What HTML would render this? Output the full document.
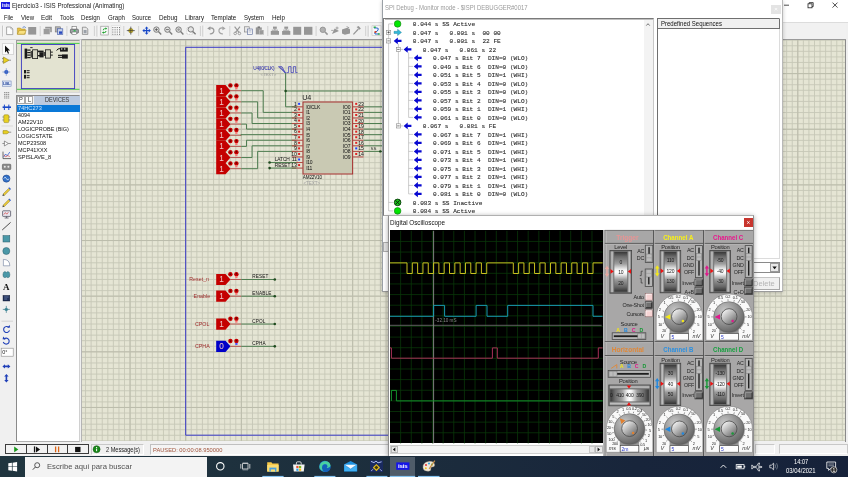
<!DOCTYPE html>
<html><head><meta charset="utf-8"><title>ISIS</title>
<style>
html,body{margin:0;padding:0;}
body{width:848px;height:477px;overflow:hidden;position:relative;background:#f0f0f0;font-family:"Liberation Sans",sans-serif;}
div{position:absolute;box-sizing:border-box;}
svg{position:absolute;left:0;top:0;overflow:visible;}
.t{white-space:nowrap;font-family:"Liberation Sans",sans-serif;}
.m{font-family:"Liberation Mono",monospace;}
</style></head><body><div id="root" style="left:0;top:0;width:848px;height:477px;overflow:hidden;will-change:transform;background:#f0f0f0;">

<div style="left:0px;top:0px;width:848px;height:23px;background:#ffffff;"></div>
<div style="left:0px;top:23px;width:848px;height:17px;background:#f1f1f1;"></div>
<div style="left:1px;top:2px;width:9px;height:7px;background:#1a1ae0;"></div>
<div class="t" style="left:2px;top:3px;font-size:5px;line-height:5px;color:#fff;letter-spacing:-0.2px;font-weight:bold;">isis</div>
<div class="t" style="left:12.20px;top:2.40px;font-size:7.5px;line-height:8.62px;color:#1c1c1c;transform:scaleX(0.8189);transform-origin:0 0;">Ejercicio3 - ISIS Professional (Animating)</div>
<div class="t" style="left:4.00px;top:13.90px;font-size:7.5px;line-height:8.62px;color:#161616;transform:scaleX(0.7695);transform-origin:0 0;">File</div>
<div class="t" style="left:20.50px;top:13.90px;font-size:7.5px;line-height:8.62px;color:#161616;transform:scaleX(0.8064);transform-origin:0 0;">View</div>
<div class="t" style="left:41.00px;top:13.90px;font-size:7.5px;line-height:8.62px;color:#161616;transform:scaleX(0.8511);transform-origin:0 0;">Edit</div>
<div class="t" style="left:59.50px;top:13.90px;font-size:7.5px;line-height:8.62px;color:#161616;transform:scaleX(0.7996);transform-origin:0 0;">Tools</div>
<div class="t" style="left:81.00px;top:13.90px;font-size:7.5px;line-height:8.62px;color:#161616;transform:scaleX(0.8138);transform-origin:0 0;">Design</div>
<div class="t" style="left:107.50px;top:13.90px;font-size:7.5px;line-height:8.62px;color:#161616;transform:scaleX(0.8155);transform-origin:0 0;">Graph</div>
<div class="t" style="left:132.00px;top:13.90px;font-size:7.5px;line-height:8.62px;color:#161616;transform:scaleX(0.7995);transform-origin:0 0;">Source</div>
<div class="t" style="left:158.50px;top:13.90px;font-size:7.5px;line-height:8.62px;color:#161616;transform:scaleX(0.8370);transform-origin:0 0;">Debug</div>
<div class="t" style="left:184.50px;top:13.90px;font-size:7.5px;line-height:8.62px;color:#161616;transform:scaleX(0.8288);transform-origin:0 0;">Library</div>
<div class="t" style="left:211.00px;top:13.90px;font-size:7.5px;line-height:8.62px;color:#161616;transform:scaleX(0.8313);transform-origin:0 0;">Template</div>
<div class="t" style="left:244.00px;top:13.90px;font-size:7.5px;line-height:8.62px;color:#161616;transform:scaleX(0.7998);transform-origin:0 0;">System</div>
<div class="t" style="left:271.50px;top:13.90px;font-size:7.5px;line-height:8.62px;color:#161616;transform:scaleX(0.8428);transform-origin:0 0;">Help</div>
<svg width="848" height="14"><g stroke="#222" stroke-width="0.8" fill="none"><path d="M784 5.2h5"/><rect x="808" y="3.8" width="4" height="4"/><path d="M809.2 3.8v-1.2h4v4h-1.2"/><path d="M832.5 2.6l5 5M837.5 2.6l-5 5"/></g></svg>
<div id="cv" style="left:82px;top:40px;width:766px;height:401px;background:#e5e5d4;overflow:hidden;">
<svg width="766" height="401">
<path d="M3.56 0V401M9.12 0V401M14.69 0V401M20.25 0V401M25.82 0V401M31.38 0V401M36.95 0V401M42.51 0V401M48.07 0V401M53.64 0V401M59.20 0V401M64.77 0V401M70.33 0V401M75.90 0V401M81.46 0V401M87.02 0V401M92.59 0V401M98.15 0V401M103.72 0V401M109.28 0V401M114.85 0V401M120.41 0V401M125.98 0V401M131.54 0V401M137.10 0V401M142.67 0V401M148.23 0V401M153.80 0V401M159.36 0V401M164.93 0V401M170.49 0V401M176.06 0V401M181.62 0V401M187.18 0V401M192.75 0V401M198.31 0V401M203.88 0V401M209.44 0V401M215.01 0V401M220.57 0V401M226.13 0V401M231.70 0V401M237.26 0V401M242.83 0V401M248.39 0V401M253.96 0V401M259.52 0V401M265.09 0V401M270.65 0V401M276.21 0V401M281.78 0V401M287.34 0V401M292.91 0V401M298.47 0V401M304.04 0V401M309.60 0V401M315.17 0V401M320.73 0V401M326.29 0V401M331.86 0V401M337.42 0V401M342.99 0V401M348.55 0V401M354.12 0V401M359.68 0V401M365.24 0V401M370.81 0V401M376.37 0V401M381.94 0V401M387.50 0V401M393.07 0V401M398.63 0V401M404.20 0V401M409.76 0V401M415.32 0V401M420.89 0V401M426.45 0V401M432.02 0V401M437.58 0V401M443.15 0V401M448.71 0V401M454.28 0V401M459.84 0V401M465.40 0V401M470.97 0V401M476.53 0V401M482.10 0V401M487.66 0V401M493.23 0V401M498.79 0V401M504.35 0V401M509.92 0V401M515.48 0V401M521.05 0V401M526.61 0V401M532.18 0V401M537.74 0V401M543.31 0V401M548.87 0V401M554.43 0V401M560.00 0V401M565.56 0V401M571.13 0V401M576.69 0V401M582.26 0V401M587.82 0V401M593.39 0V401M598.95 0V401M604.51 0V401M610.08 0V401M615.64 0V401M621.21 0V401M626.77 0V401M632.34 0V401M637.90 0V401M643.46 0V401M649.03 0V401M654.59 0V401M660.16 0V401M665.72 0V401M671.29 0V401M676.85 0V401M682.42 0V401M687.98 0V401M693.54 0V401M699.11 0V401M704.67 0V401M710.24 0V401M715.80 0V401M721.37 0V401M726.93 0V401M732.50 0V401M738.06 0V401M743.62 0V401M749.19 0V401M754.75 0V401M760.32 0V401M765.88 0V401" stroke="#c6c7b7" stroke-width="0.9" fill="none"/>
<path d="M0 0.21H766M0 5.78H766M0 11.34H766M0 16.91H766M0 22.47H766M0 28.04H766M0 33.60H766M0 39.16H766M0 44.73H766M0 50.29H766M0 55.86H766M0 61.42H766M0 66.99H766M0 72.55H766M0 78.12H766M0 83.68H766M0 89.24H766M0 94.81H766M0 100.37H766M0 105.94H766M0 111.50H766M0 117.07H766M0 122.63H766M0 128.19H766M0 133.76H766M0 139.32H766M0 144.89H766M0 150.45H766M0 156.02H766M0 161.58H766M0 167.15H766M0 172.71H766M0 178.27H766M0 183.84H766M0 189.40H766M0 194.97H766M0 200.53H766M0 206.10H766M0 211.66H766M0 217.23H766M0 222.79H766M0 228.35H766M0 233.92H766M0 239.48H766M0 245.05H766M0 250.61H766M0 256.18H766M0 261.74H766M0 267.30H766M0 272.87H766M0 278.43H766M0 284.00H766M0 289.56H766M0 295.13H766M0 300.69H766M0 306.26H766M0 311.82H766M0 317.38H766M0 322.95H766M0 328.51H766M0 334.08H766M0 339.64H766M0 345.21H766M0 350.77H766M0 356.34H766M0 361.90H766M0 367.46H766M0 373.03H766M0 378.59H766M0 384.16H766M0 389.72H766M0 395.29H766M0 400.85H766" stroke="#c6c7b7" stroke-width="0.9" fill="none"/>
<path d="M0 33.60H766M48.07 0V401M0 89.24H766M103.72 0V401M0 144.89H766M159.36 0V401M0 200.53H766M215.01 0V401M0 256.18H766M270.65 0V401M0 311.82H766M326.29 0V401M0 367.46H766M381.94 0V401M437.58 0V401M493.23 0V401M548.87 0V401M604.51 0V401M660.16 0V401M715.80 0V401" stroke="#bcbdac" stroke-width="1" fill="none"/>
</svg></div>
<div style="left:0px;top:38.9px;width:82px;height:0.8px;background:#d4d4d4;"></div>
<div style="left:81.3px;top:39.4px;width:765px;height:0.9px;background:#9a9a9a;"></div>
<div style="left:81.2px;top:39.4px;width:0.9px;height:402.6px;background:#b4b4b4;"></div>
<div style="left:845.4px;top:40px;width:0.9px;height:402px;background:#8a8a8a;"></div>
<div style="left:846.3px;top:23px;width:1.7px;height:420px;background:#f0f0f0;"></div>
<div style="left:0px;top:22.2px;width:848px;height:1.2px;background:#dcdcdc;"></div>
<svg width="848" height="477" style="font-family:'Liberation Sans',sans-serif;">
<path d="M700 47.3H185.7V435.2H700" stroke="#3a3ac8" stroke-width="1" fill="none"/>
<path d="M216.2 85.11000000000001H225.5L230.5 90.71000000000001L225.5 96.31H216.2Z" fill="#c40000"/>
<text x="221.5" y="93.71000000000001" font-size="8.2" fill="#efc6c6" text-anchor="middle">1</text>
<circle cx="230.39999999999998" cy="85.41000000000001" r="2.2" fill="#c80000"/><circle cx="236.39999999999998" cy="85.41000000000001" r="2.2" fill="#c80000"/>
<circle cx="230.39999999999998" cy="85.41000000000001" r="0.9" fill="#700000"/><circle cx="236.39999999999998" cy="84.91000000000001" r="0.9" fill="#700000"/>
<rect x="235.29999999999998" y="87.31" width="2.2" height="2" fill="#ff7070"/>
<path d="M230.2 90.71000000000001H241.2" stroke="#b24a44" stroke-width="0.9"/>
<path d="M241.2 90.71000000000001H263.20V112.39H296.3" stroke="#47784a" stroke-width="0.95" fill="none"/>
<path d="M216.2 96.25H225.5L230.5 101.85L225.5 107.44999999999999H216.2Z" fill="#c40000"/>
<text x="221.5" y="104.85" font-size="8.2" fill="#efc6c6" text-anchor="middle">1</text>
<circle cx="230.39999999999998" cy="96.55" r="2.2" fill="#c80000"/><circle cx="236.39999999999998" cy="96.55" r="2.2" fill="#c80000"/>
<circle cx="230.39999999999998" cy="96.55" r="0.9" fill="#700000"/><circle cx="236.39999999999998" cy="96.05" r="0.9" fill="#700000"/>
<rect x="235.29999999999998" y="98.44999999999999" width="2.2" height="2" fill="#ff7070"/>
<path d="M230.2 101.85H241.2" stroke="#b24a44" stroke-width="0.9"/>
<path d="M241.2 101.85H257.63V117.96H296.3" stroke="#47784a" stroke-width="0.95" fill="none"/>
<path d="M216.2 107.39000000000001H225.5L230.5 112.99000000000001L225.5 118.59H216.2Z" fill="#c40000"/>
<text x="221.5" y="115.99000000000001" font-size="8.2" fill="#efc6c6" text-anchor="middle">1</text>
<circle cx="230.39999999999998" cy="107.69000000000001" r="2.2" fill="#c80000"/><circle cx="236.39999999999998" cy="107.69000000000001" r="2.2" fill="#c80000"/>
<circle cx="230.39999999999998" cy="107.69000000000001" r="0.9" fill="#700000"/><circle cx="236.39999999999998" cy="107.19000000000001" r="0.9" fill="#700000"/>
<rect x="235.29999999999998" y="109.59" width="2.2" height="2" fill="#ff7070"/>
<path d="M230.2 112.99000000000001H241.2" stroke="#b24a44" stroke-width="0.9"/>
<path d="M241.2 112.99000000000001H252.06V123.53H296.3" stroke="#47784a" stroke-width="0.95" fill="none"/>
<path d="M216.2 118.53H225.5L230.5 124.13L225.5 129.73H216.2Z" fill="#c40000"/>
<text x="221.5" y="127.13" font-size="8.2" fill="#efc6c6" text-anchor="middle">1</text>
<circle cx="230.39999999999998" cy="118.83" r="2.2" fill="#c80000"/><circle cx="236.39999999999998" cy="118.83" r="2.2" fill="#c80000"/>
<circle cx="230.39999999999998" cy="118.83" r="0.9" fill="#700000"/><circle cx="236.39999999999998" cy="118.33" r="0.9" fill="#700000"/>
<rect x="235.29999999999998" y="120.72999999999999" width="2.2" height="2" fill="#ff7070"/>
<path d="M230.2 124.13H241.2" stroke="#b24a44" stroke-width="0.9"/>
<path d="M241.2 124.13H246.49V129.10H296.3" stroke="#47784a" stroke-width="0.95" fill="none"/>
<path d="M216.2 129.67000000000002H225.5L230.5 135.27L225.5 140.87H216.2Z" fill="#c40000"/>
<text x="221.5" y="138.27" font-size="8.2" fill="#efc6c6" text-anchor="middle">1</text>
<circle cx="230.39999999999998" cy="129.97" r="2.2" fill="#c80000"/><circle cx="236.39999999999998" cy="129.97" r="2.2" fill="#c80000"/>
<circle cx="230.39999999999998" cy="129.97" r="0.9" fill="#700000"/><circle cx="236.39999999999998" cy="129.47" r="0.9" fill="#700000"/>
<rect x="235.29999999999998" y="131.87" width="2.2" height="2" fill="#ff7070"/>
<path d="M230.2 135.27H241.2" stroke="#b24a44" stroke-width="0.9"/>
<path d="M241.2 135.27H240.92V134.67H296.3" stroke="#47784a" stroke-width="0.95" fill="none"/>
<path d="M216.2 140.81H225.5L230.5 146.41L225.5 152.01H216.2Z" fill="#c40000"/>
<text x="221.5" y="149.41" font-size="8.2" fill="#efc6c6" text-anchor="middle">1</text>
<circle cx="230.39999999999998" cy="141.10999999999999" r="2.2" fill="#c80000"/><circle cx="236.39999999999998" cy="141.10999999999999" r="2.2" fill="#c80000"/>
<circle cx="230.39999999999998" cy="141.10999999999999" r="0.9" fill="#700000"/><circle cx="236.39999999999998" cy="140.60999999999999" r="0.9" fill="#700000"/>
<rect x="235.29999999999998" y="143.01" width="2.2" height="2" fill="#ff7070"/>
<path d="M230.2 146.41H241.2" stroke="#b24a44" stroke-width="0.9"/>
<path d="M241.2 146.41H246.49V140.24H296.3" stroke="#47784a" stroke-width="0.95" fill="none"/>
<path d="M216.2 151.95000000000002H225.5L230.5 157.55L225.5 163.15H216.2Z" fill="#c40000"/>
<text x="221.5" y="160.55" font-size="8.2" fill="#efc6c6" text-anchor="middle">1</text>
<circle cx="230.39999999999998" cy="152.25" r="2.2" fill="#c80000"/><circle cx="236.39999999999998" cy="152.25" r="2.2" fill="#c80000"/>
<circle cx="230.39999999999998" cy="152.25" r="0.9" fill="#700000"/><circle cx="236.39999999999998" cy="151.75" r="0.9" fill="#700000"/>
<rect x="235.29999999999998" y="154.15" width="2.2" height="2" fill="#ff7070"/>
<path d="M230.2 157.55H241.2" stroke="#b24a44" stroke-width="0.9"/>
<path d="M241.2 157.55H252.06V145.81H296.3" stroke="#47784a" stroke-width="0.95" fill="none"/>
<path d="M216.2 163.09H225.5L230.5 168.69L225.5 174.29H216.2Z" fill="#c40000"/>
<text x="221.5" y="171.69" font-size="8.2" fill="#efc6c6" text-anchor="middle">1</text>
<circle cx="230.39999999999998" cy="163.39" r="2.2" fill="#c80000"/><circle cx="236.39999999999998" cy="163.39" r="2.2" fill="#c80000"/>
<circle cx="230.39999999999998" cy="163.39" r="0.9" fill="#700000"/><circle cx="236.39999999999998" cy="162.89" r="0.9" fill="#700000"/>
<rect x="235.29999999999998" y="165.29" width="2.2" height="2" fill="#ff7070"/>
<path d="M230.2 168.69H241.2" stroke="#b24a44" stroke-width="0.9"/>
<path d="M241.2 168.69H257.63V151.38H296.3" stroke="#47784a" stroke-width="0.95" fill="none"/>
<rect x="303.0" y="102.0" width="49.60000000000002" height="72.0" fill="#c9c9b3" stroke="#a83030" stroke-width="1"/>
<text x="302.3" y="100.3" font-size="7.2" fill="#222" letter-spacing="-0.2">U4</text>
<text x="302.8" y="178.8" font-size="4.6" fill="#111" letter-spacing="-0.15">AM22V10</text>
<text x="303.5" y="184.6" font-size="4.6" fill="#a0a0a0" letter-spacing="-0.1">&lt;TEXT&gt;</text>
<path d="M291.8 106.82H303.0" stroke="#b24a44" stroke-width="1"/>
<rect x="298.1" y="102.82" width="2" height="2" fill="#2040ff"/>
<text x="296.90000000000003" y="105.62" font-size="5.2" fill="#111" text-anchor="end" letter-spacing="-0.1">1</text>
<text x="306.2" y="108.72" font-size="5" fill="#111" letter-spacing="-0.25">I0/CLK</text>
<path d="M291.8 112.39H303.0" stroke="#b24a44" stroke-width="1"/>
<rect x="298.1" y="108.39" width="2" height="2" fill="#e02020"/>
<text x="296.90000000000003" y="111.19" font-size="5.2" fill="#111" text-anchor="end" letter-spacing="-0.1">2</text>
<text x="306.2" y="114.29" font-size="5" fill="#111" letter-spacing="-0.25">I1</text>
<path d="M291.8 117.96H303.0" stroke="#b24a44" stroke-width="1"/>
<rect x="298.1" y="113.96" width="2" height="2" fill="#e02020"/>
<text x="296.90000000000003" y="116.76" font-size="5.2" fill="#111" text-anchor="end" letter-spacing="-0.1">3</text>
<text x="306.2" y="119.86" font-size="5" fill="#111" letter-spacing="-0.25">I2</text>
<path d="M291.8 123.53H303.0" stroke="#b24a44" stroke-width="1"/>
<rect x="298.1" y="119.53" width="2" height="2" fill="#e02020"/>
<text x="296.90000000000003" y="122.33" font-size="5.2" fill="#111" text-anchor="end" letter-spacing="-0.1">4</text>
<text x="306.2" y="125.43" font-size="5" fill="#111" letter-spacing="-0.25">I3</text>
<path d="M291.8 129.10H303.0" stroke="#b24a44" stroke-width="1"/>
<rect x="298.1" y="125.10" width="2" height="2" fill="#e02020"/>
<text x="296.90000000000003" y="127.90" font-size="5.2" fill="#111" text-anchor="end" letter-spacing="-0.1">5</text>
<text x="306.2" y="131.00" font-size="5" fill="#111" letter-spacing="-0.25">I4</text>
<path d="M291.8 134.67H303.0" stroke="#b24a44" stroke-width="1"/>
<rect x="298.1" y="130.67" width="2" height="2" fill="#e02020"/>
<text x="296.90000000000003" y="133.47" font-size="5.2" fill="#111" text-anchor="end" letter-spacing="-0.1">6</text>
<text x="306.2" y="136.57" font-size="5" fill="#111" letter-spacing="-0.25">I5</text>
<path d="M291.8 140.24H303.0" stroke="#b24a44" stroke-width="1"/>
<rect x="298.1" y="136.24" width="2" height="2" fill="#e02020"/>
<text x="296.90000000000003" y="139.04" font-size="5.2" fill="#111" text-anchor="end" letter-spacing="-0.1">7</text>
<text x="306.2" y="142.14" font-size="5" fill="#111" letter-spacing="-0.25">I6</text>
<path d="M291.8 145.81H303.0" stroke="#b24a44" stroke-width="1"/>
<rect x="298.1" y="141.81" width="2" height="2" fill="#e02020"/>
<text x="296.90000000000003" y="144.61" font-size="5.2" fill="#111" text-anchor="end" letter-spacing="-0.1">8</text>
<text x="306.2" y="147.71" font-size="5" fill="#111" letter-spacing="-0.25">I7</text>
<path d="M291.8 151.38H303.0" stroke="#b24a44" stroke-width="1"/>
<rect x="298.1" y="147.38" width="2" height="2" fill="#e02020"/>
<text x="296.90000000000003" y="150.18" font-size="5.2" fill="#111" text-anchor="end" letter-spacing="-0.1">9</text>
<text x="306.2" y="153.28" font-size="5" fill="#111" letter-spacing="-0.25">I8</text>
<path d="M291.8 156.95H303.0" stroke="#b24a44" stroke-width="1"/>
<rect x="298.1" y="152.95" width="2" height="2" fill="#e02020"/>
<text x="296.90000000000003" y="155.75" font-size="5.2" fill="#111" text-anchor="end" letter-spacing="-0.1">10</text>
<text x="306.2" y="158.85" font-size="5" fill="#111" letter-spacing="-0.25">I9</text>
<path d="M291.8 162.52H303.0" stroke="#b24a44" stroke-width="1"/>
<rect x="298.1" y="158.52" width="2" height="2" fill="#2040ff"/>
<text x="296.90000000000003" y="161.32" font-size="5.2" fill="#111" text-anchor="end" letter-spacing="-0.1">11</text>
<text x="306.2" y="164.42" font-size="5" fill="#111" letter-spacing="-0.25">I10</text>
<path d="M291.8 168.09H303.0" stroke="#b24a44" stroke-width="1"/>
<rect x="298.1" y="164.09" width="2" height="2" fill="#e02020"/>
<text x="296.90000000000003" y="166.89" font-size="5.2" fill="#111" text-anchor="end" letter-spacing="-0.1">13</text>
<text x="306.2" y="169.99" font-size="5" fill="#111" letter-spacing="-0.25">I11</text>
<path d="M352.6 106.82H363.6" stroke="#b24a44" stroke-width="1"/>
<rect x="355.20000000000005" y="102.82" width="2" height="2" fill="#e02020"/>
<text x="358.20000000000005" y="105.82" font-size="5.2" fill="#111" letter-spacing="-0.1">23</text>
<text x="350.40000000000003" y="108.72" font-size="5" fill="#111" text-anchor="end" letter-spacing="-0.2">IO0</text>
<path d="M363.6 106.82H384" stroke="#47784a" stroke-width="0.95"/>
<path d="M352.6 112.39H363.6" stroke="#b24a44" stroke-width="1"/>
<rect x="355.20000000000005" y="108.39" width="2" height="2" fill="#e02020"/>
<text x="358.20000000000005" y="111.39" font-size="5.2" fill="#111" letter-spacing="-0.1">22</text>
<text x="350.40000000000003" y="114.29" font-size="5" fill="#111" text-anchor="end" letter-spacing="-0.2">IO1</text>
<path d="M363.6 112.39H384" stroke="#47784a" stroke-width="0.95"/>
<path d="M352.6 117.96H363.6" stroke="#b24a44" stroke-width="1"/>
<rect x="355.20000000000005" y="113.96" width="2" height="2" fill="#e02020"/>
<text x="358.20000000000005" y="116.96" font-size="5.2" fill="#111" letter-spacing="-0.1">21</text>
<text x="350.40000000000003" y="119.86" font-size="5" fill="#111" text-anchor="end" letter-spacing="-0.2">IO2</text>
<path d="M363.6 117.96H384" stroke="#47784a" stroke-width="0.95"/>
<path d="M352.6 123.53H363.6" stroke="#b24a44" stroke-width="1"/>
<rect x="355.20000000000005" y="119.53" width="2" height="2" fill="#e02020"/>
<text x="358.20000000000005" y="122.53" font-size="5.2" fill="#111" letter-spacing="-0.1">20</text>
<text x="350.40000000000003" y="125.43" font-size="5" fill="#111" text-anchor="end" letter-spacing="-0.2">IO3</text>
<path d="M363.6 123.53H384" stroke="#47784a" stroke-width="0.95"/>
<path d="M352.6 129.10H363.6" stroke="#b24a44" stroke-width="1"/>
<rect x="355.20000000000005" y="125.10" width="2" height="2" fill="#e02020"/>
<text x="358.20000000000005" y="128.10" font-size="5.2" fill="#111" letter-spacing="-0.1">19</text>
<text x="350.40000000000003" y="131.00" font-size="5" fill="#111" text-anchor="end" letter-spacing="-0.2">IO4</text>
<path d="M363.6 129.10H384" stroke="#47784a" stroke-width="0.95"/>
<path d="M352.6 134.67H363.6" stroke="#b24a44" stroke-width="1"/>
<rect x="355.20000000000005" y="130.67" width="2" height="2" fill="#e02020"/>
<text x="358.20000000000005" y="133.67" font-size="5.2" fill="#111" letter-spacing="-0.1">18</text>
<text x="350.40000000000003" y="136.57" font-size="5" fill="#111" text-anchor="end" letter-spacing="-0.2">IO5</text>
<path d="M363.6 134.67H384" stroke="#47784a" stroke-width="0.95"/>
<path d="M352.6 140.24H363.6" stroke="#b24a44" stroke-width="1"/>
<rect x="355.20000000000005" y="136.24" width="2" height="2" fill="#e02020"/>
<text x="358.20000000000005" y="139.24" font-size="5.2" fill="#111" letter-spacing="-0.1">17</text>
<text x="350.40000000000003" y="142.14" font-size="5" fill="#111" text-anchor="end" letter-spacing="-0.2">IO6</text>
<path d="M363.6 140.24H384" stroke="#47784a" stroke-width="0.95"/>
<path d="M352.6 145.81H363.6" stroke="#b24a44" stroke-width="1"/>
<rect x="355.20000000000005" y="141.81" width="2" height="2" fill="#e02020"/>
<text x="358.20000000000005" y="144.81" font-size="5.2" fill="#111" letter-spacing="-0.1">16</text>
<text x="350.40000000000003" y="147.71" font-size="5" fill="#111" text-anchor="end" letter-spacing="-0.2">IO7</text>
<path d="M363.6 145.81H384" stroke="#47784a" stroke-width="0.95"/>
<path d="M352.6 151.38H363.6" stroke="#b24a44" stroke-width="1"/>
<rect x="355.20000000000005" y="147.38" width="2" height="2" fill="#2040ff"/>
<text x="358.20000000000005" y="150.38" font-size="5.2" fill="#111" letter-spacing="-0.1">15</text>
<text x="350.40000000000003" y="153.28" font-size="5" fill="#111" text-anchor="end" letter-spacing="-0.2">IO8</text>
<path d="M363.6 151.38H384" stroke="#47784a" stroke-width="0.95"/>
<path d="M352.6 156.95H363.6" stroke="#b24a44" stroke-width="1"/>
<rect x="355.20000000000005" y="152.95" width="2" height="2" fill="#e02020"/>
<text x="358.20000000000005" y="155.95" font-size="5.2" fill="#111" letter-spacing="-0.1">14</text>
<text x="350.40000000000003" y="158.85" font-size="5" fill="#111" text-anchor="end" letter-spacing="-0.2">IO9</text>
<text x="370.5" y="150.3" font-size="4.4" fill="#222">SS</text>
<circle cx="380.3" cy="151.38" r="1.2" fill="#1e4a1e"/>
<text x="253.3" y="70" font-size="4.7" fill="#1818a8" letter-spacing="-0.25">U4(I0/CLK)</text>
<text x="260.5" y="75.6" font-size="4.4" fill="#9a9a9a" letter-spacing="-0.1">&lt;TEXT&gt;</text>
<path d="M278.5 66.7L282 66.7L285.6 73.2Z M280.2 66.7L285.6 73.2" stroke="#3030b8" stroke-width="0.7" fill="none"/>
<path d="M286.5 72.6H288.6V66.6H291V72.6H293.4V66.6H295.7V72.6H297.5" stroke="#3030b8" stroke-width="0.7" fill="none"/>
<path d="M285.6 73.2V106.82H296.3" stroke="#47784a" stroke-width="0.95" fill="none"/>
<path d="M285.6 91H384" stroke="#47784a" stroke-width="0.95" fill="none"/>
<circle cx="285.6" cy="91" r="1.3" fill="#1e4a1e"/>
<path d="M269.6 162.52H296.3" stroke="#47784a" stroke-width="0.95"/>
<circle cx="269.6" cy="162.52" r="1.3" fill="#1e4a1e"/>
<text x="274.8" y="161.32" font-size="4.8" fill="#111" letter-spacing="-0.1">LATCH</text>
<path d="M269.6 168.09H296.3" stroke="#47784a" stroke-width="0.95"/>
<circle cx="269.6" cy="168.09" r="1.3" fill="#1e4a1e"/>
<text x="274.8" y="166.89" font-size="4.8" fill="#111" letter-spacing="-0.1">RESET</text>
<path d="M216.2 273.89H225.5L230.5 279.49L225.5 285.09000000000003H216.2Z" fill="#c40000"/>
<text x="221.5" y="282.49" font-size="8.2" fill="#efc6c6" text-anchor="middle">1</text>
<circle cx="230.39999999999998" cy="274.19" r="2.2" fill="#c80000"/><circle cx="236.39999999999998" cy="274.19" r="2.2" fill="#c80000"/>
<circle cx="230.39999999999998" cy="274.19" r="0.9" fill="#700000"/><circle cx="236.39999999999998" cy="273.69" r="0.9" fill="#700000"/>
<rect x="235.29999999999998" y="276.09000000000003" width="2.2" height="2" fill="#ff7070"/>
<path d="M230.2 279.49H241.2" stroke="#b24a44" stroke-width="0.9"/>
<text x="189.3" y="281.49" font-size="5.3" fill="#a02c2c">Reset_n</text>
<path d="M241.2 279.49H274.8" stroke="#47784a" stroke-width="0.95"/>
<circle cx="274.8" cy="279.49" r="1.3" fill="#1e4a1e"/>
<text x="252.3" y="278.09" font-size="4.7" fill="#111" letter-spacing="0.1">RESET</text>
<path d="M216.2 290.6H225.5L230.5 296.20000000000005L225.5 301.80000000000007H216.2Z" fill="#c40000"/>
<text x="221.5" y="299.20000000000005" font-size="8.2" fill="#efc6c6" text-anchor="middle">1</text>
<circle cx="230.39999999999998" cy="290.90000000000003" r="2.2" fill="#c80000"/><circle cx="236.39999999999998" cy="290.90000000000003" r="2.2" fill="#c80000"/>
<circle cx="230.39999999999998" cy="290.90000000000003" r="0.9" fill="#700000"/><circle cx="236.39999999999998" cy="290.40000000000003" r="0.9" fill="#700000"/>
<rect x="235.29999999999998" y="292.80000000000007" width="2.2" height="2" fill="#ff7070"/>
<path d="M230.2 296.20000000000005H241.2" stroke="#b24a44" stroke-width="0.9"/>
<text x="193.6" y="298.20" font-size="5.3" fill="#a02c2c">Enable</text>
<path d="M241.2 296.20H274.8" stroke="#47784a" stroke-width="0.95"/>
<circle cx="274.8" cy="296.20" r="1.3" fill="#1e4a1e"/>
<text x="252.3" y="294.80" font-size="4.7" fill="#111" letter-spacing="0.1">ENABLE</text>
<path d="M216.2 318.45H225.5L230.5 324.05L225.5 329.65000000000003H216.2Z" fill="#c40000"/>
<text x="221.5" y="327.05" font-size="8.2" fill="#efc6c6" text-anchor="middle">1</text>
<circle cx="230.39999999999998" cy="318.75" r="2.2" fill="#c80000"/><circle cx="236.39999999999998" cy="318.75" r="2.2" fill="#c80000"/>
<circle cx="230.39999999999998" cy="318.75" r="0.9" fill="#700000"/><circle cx="236.39999999999998" cy="318.25" r="0.9" fill="#700000"/>
<rect x="235.29999999999998" y="320.65000000000003" width="2.2" height="2" fill="#ff7070"/>
<path d="M230.2 324.05H241.2" stroke="#b24a44" stroke-width="0.9"/>
<text x="195.0" y="326.05" font-size="5.3" fill="#a02c2c">CPOL</text>
<path d="M241.2 324.05H274.8" stroke="#47784a" stroke-width="0.95"/>
<circle cx="274.8" cy="324.05" r="1.3" fill="#1e4a1e"/>
<text x="252.3" y="322.65" font-size="4.7" fill="#111" letter-spacing="0.1">CPOL</text>
<path d="M216.2 340.73H225.5L230.5 346.33000000000004L225.5 351.93000000000006H216.2Z" fill="#0000c8"/>
<text x="221.5" y="349.33000000000004" font-size="8.2" fill="#efc6c6" text-anchor="middle">0</text>
<circle cx="230.39999999999998" cy="341.03000000000003" r="2.2" fill="#c80000"/><circle cx="236.39999999999998" cy="341.03000000000003" r="2.2" fill="#c80000"/>
<circle cx="230.39999999999998" cy="341.03000000000003" r="0.9" fill="#700000"/><circle cx="236.39999999999998" cy="340.53000000000003" r="0.9" fill="#700000"/>
<rect x="235.29999999999998" y="342.93000000000006" width="2.2" height="2" fill="#5050ff"/>
<path d="M230.2 346.33000000000004H241.2" stroke="#b24a44" stroke-width="0.9"/>
<text x="195.0" y="348.33" font-size="5.3" fill="#a02c2c">CPHA</text>
<path d="M241.2 346.33H274.8" stroke="#47784a" stroke-width="0.95"/>
<circle cx="274.8" cy="346.33" r="1.3" fill="#1e4a1e"/>
<text x="252.3" y="344.93" font-size="4.7" fill="#111" letter-spacing="0.1">CPHA</text>
</svg>
<div style="left:0;top:40px;width:15px;height:402px;background:#f0f0f0;"></div>
<div style="left:1.5px;top:42.5px;width:12px;height:12.5px;background:#fbfbfb;border:1px solid #d8d8d8;"></div>
<div style="left:16px;top:40px;width:64.2px;height:53px;background:#e3e3d1;border:1px solid #9c9c9c;border-right-color:#d8d8d8;border-bottom-color:#d8d8d8;"></div>
<svg width="100" height="100">
<path d="M17 43.4H79.5M17 89.3H79.5" stroke="#38c838" stroke-width="0.9"/>
<rect x="21.4" y="44.5" width="53.2" height="44.1" fill="none" stroke="#3838c0" stroke-width="0.9"/>
<rect x="24.6" y="48.6" width="2.6" height="10" fill="#1a1a1a"/><rect x="27.2" y="49.5" width="3.4" height="1.2" fill="#1a1a1a"/><rect x="27.2" y="52" width="3.4" height="1.2" fill="#1a1a1a"/><rect x="27.2" y="54.5" width="3.4" height="1.2" fill="#1a1a1a"/><rect x="27.2" y="57" width="3.4" height="1.2" fill="#1a1a1a"/>
<rect x="30.2" y="47.2" width="2.4" height="0.9" fill="#1a1a1a"/>
<rect x="32.6" y="49.8" width="5" height="8.8" fill="#d6d6c4" stroke="#1a1a1a" stroke-width="0.8"/>
<rect x="30.6" y="51" width="2" height="6.5" fill="#1a1a1a" opacity="0.8"/>
<rect x="38" y="50.6" width="5.6" height="1.6" fill="#1a1a1a"/><rect x="39.4" y="52.2" width="4.2" height="5.2" fill="#1a1a1a"/><rect x="38" y="55" width="2" height="1.3" fill="#1a1a1a"/>
<rect x="45.4" y="49.8" width="5" height="8.3" fill="#d6d6c4" stroke="#1a1a1a" stroke-width="0.8"/>
<rect x="43.6" y="52" width="2" height="4" fill="#1a1a1a" opacity="0.8"/><rect x="50.6" y="51.6" width="2.2" height="1" fill="#1a1a1a"/><rect x="50.6" y="54.6" width="2.2" height="1" fill="#1a1a1a"/>
<path d="M56.6 50.6q1-2.2 3.4-2" stroke="#1a1a1a" stroke-width="1" fill="none"/><rect x="60" y="47.6" width="7.8" height="4" fill="#1a1a1a"/><rect x="61" y="48.4" width="1.4" height="1.2" fill="#ddd"/><rect x="64" y="48.4" width="1.4" height="1.2" fill="#ddd"/>
<rect x="58" y="54.8" width="4" height="1.1" fill="#1a1a1a"/><rect x="58" y="56.8" width="4" height="1.1" fill="#1a1a1a"/><rect x="62" y="54.4" width="5.8" height="4.2" fill="#1a1a1a"/>
<rect x="24" y="70" width="2" height="3.4" fill="#1a1a1a"/><rect x="26.6" y="70.2" width="3" height="1" fill="#1a1a1a"/><rect x="26.6" y="72.2" width="3" height="1" fill="#1a1a1a"/>
<rect x="24" y="74.8" width="2" height="3.8" fill="#1a1a1a"/><rect x="26.6" y="75.2" width="3" height="1" fill="#1a1a1a"/><rect x="26.6" y="77.2" width="3" height="1" fill="#1a1a1a"/>
</svg>
<div style="left:16px;top:94.5px;width:63.8px;height:347px;background:#fff;border:1px solid #8a8a8a;border-right-color:#d0d0d0;border-bottom-color:#b0b0b0;"></div>
<div style="left:17px;top:95.5px;width:62.5px;height:9px;background:#f0f0f0;"></div>
<div style="left:17.2px;top:95.8px;width:7.6px;height:8.4px;background:#fcfcfc;border:1px solid #a8a8a8;"></div>
<div style="left:25.4px;top:95.8px;width:7.6px;height:8.4px;background:#fcfcfc;border:1px solid #a8a8a8;"></div>
<div class="t" style="left:19.20px;top:95.90px;font-size:7.3px;line-height:8.39px;color:#333;transform:scaleX(0.7804);transform-origin:0 0;">P</div>
<div class="t" style="left:27.80px;top:95.90px;font-size:7.3px;line-height:8.39px;color:#333;transform:scaleX(0.7882);transform-origin:0 0;">L</div>
<div style="left:34px;top:95.5px;width:45.5px;height:9px;background:#bccadf;"></div>
<div class="t" style="left:44.70px;top:95.90px;font-size:7.1px;line-height:8.16px;color:#333;transform:scaleX(0.7796);transform-origin:0 0;">DEVICES</div>
<div style="left:17px;top:104.6px;width:62.5px;height:7px;background:#0a78d7;"></div>
<div class="t" style="left:18.20px;top:104.30px;font-size:6.1px;line-height:7.01px;color:#cfe6ff;transform:scaleX(0.9234);transform-origin:0 0;">74HC273</div>
<div class="t" style="left:18.20px;top:111.20px;font-size:6.1px;line-height:7.01px;color:#111;transform:scaleX(0.8843);transform-origin:0 0;">4094</div>
<div class="t" style="left:18.20px;top:118.10px;font-size:6.1px;line-height:7.01px;color:#111;transform:scaleX(0.9332);transform-origin:0 0;">AM22V10</div>
<div class="t" style="left:18.20px;top:125.00px;font-size:6.1px;line-height:7.01px;color:#111;transform:scaleX(0.9010);transform-origin:0 0;">LOGICPROBE (BIG)</div>
<div class="t" style="left:18.20px;top:131.90px;font-size:6.1px;line-height:7.01px;color:#111;transform:scaleX(0.9169);transform-origin:0 0;">LOGICSTATE</div>
<div class="t" style="left:18.20px;top:138.80px;font-size:6.1px;line-height:7.01px;color:#111;transform:scaleX(0.9040);transform-origin:0 0;">MCP23S08</div>
<div class="t" style="left:18.20px;top:145.70px;font-size:6.1px;line-height:7.01px;color:#111;transform:scaleX(0.9033);transform-origin:0 0;">MCP41XXX</div>
<div class="t" style="left:18.20px;top:152.60px;font-size:6.1px;line-height:7.01px;color:#111;transform:scaleX(0.9265);transform-origin:0 0;">SPISLAVE_8</div>
<svg width="848" height="60">
<path d="M2.6 25.6V36.6" stroke="#c4c4c4" stroke-width="1"/><path d="M3.6 25.6V36.600" stroke="#fff" stroke-width="0.6"/>
<path d="M97.0 25.6V36.6" stroke="#c4c4c4" stroke-width="1"/><path d="M98.0 25.6V36.600" stroke="#fff" stroke-width="0.6"/>
<path d="M202.9 25.6V36.6" stroke="#c4c4c4" stroke-width="1"/><path d="M203.9 25.6V36.600" stroke="#fff" stroke-width="0.6"/>
<path d="M368.2 25.6V36.6" stroke="#c4c4c4" stroke-width="1"/><path d="M369.2 25.6V36.600" stroke="#fff" stroke-width="0.6"/>
<path d="M40.2 26V36" stroke="#cdcdcd" stroke-width="0.9"/>
<path d="M66.9 26V36" stroke="#cdcdcd" stroke-width="0.9"/>
<path d="M94.4 26V36" stroke="#cdcdcd" stroke-width="0.9"/>
<path d="M123.8 26V36" stroke="#cdcdcd" stroke-width="0.9"/>
<path d="M138.6 26V36" stroke="#cdcdcd" stroke-width="0.9"/>
<path d="M200.4 26V36" stroke="#cdcdcd" stroke-width="0.9"/>
<path d="M229.8 26V36" stroke="#cdcdcd" stroke-width="0.9"/>
<path d="M267.8 26V36" stroke="#cdcdcd" stroke-width="0.9"/>
<path d="M316.1 26V36" stroke="#cdcdcd" stroke-width="0.9"/>
<path d="M365.7 26V36" stroke="#cdcdcd" stroke-width="0.9"/>
<path d="M6.600 27h4.200l2 2v5.600h-6.200z" fill="#fdfdfd" stroke="#8a8a8a" stroke-width="0.7"/><path d="M10.800 27v2h2" fill="none" stroke="#8a8a8a" stroke-width="0.5"/>
<path d="M17.400 28h3l.8 1h4v5.200h-7.800z" fill="#e8c040" stroke="#a88820" stroke-width="0.5"/><path d="M17.400 34.200l1.800-3.800h7l-1.800 3.800z" fill="#f8e080" stroke="#a88820" stroke-width="0.5"/><path d="M22.600 27.400q1.800-1.400 3.200.2" stroke="#4870c0" stroke-width="0.8" fill="none"/>
<rect x="28.2" y="27" width="8" height="7.600" fill="#969696"/>
<rect x="45.200" y="26.800" width="6.600" height="5.400" fill="#969696"/><rect x="43.400" y="28.800" width="6.600" height="5.600" fill="#9c9c9c" stroke="#f0f0f0" stroke-width="0.4"/>
<rect x="55.2" y="26.800" width="5.400" height="5.200" fill="#b0b0b0" stroke="#6a6a6a" stroke-width="0.5"/><rect x="57.600" y="28.800" width="5.200" height="5.600" fill="#c8d4e8" stroke="#3850a8" stroke-width="0.6"/><rect x="59" y="31.400" width="3" height="2.400" fill="#2848c0"/>
<rect x="72" y="26.600" width="4.600" height="3" fill="#fff" stroke="#555" stroke-width="0.5"/><rect x="70.400" y="29.200" width="8" height="4" rx="0.8" fill="#a0a4a8" stroke="#444" stroke-width="0.6"/><rect x="72" y="32" width="4.600" height="2.600" fill="#fff" stroke="#555" stroke-width="0.5"/><rect x="73.600" y="30.200" width="2" height="1.200" fill="#20c040"/>
<path d="M82.400 27.200h3.600l1.800 1.800v5.400h-5.400z" fill="#e8e8e8" stroke="#666" stroke-width="0.6"/><rect x="83.600" y="30" width="3" height="3.200" fill="#9aa0a8"/>
<rect x="100.800" y="26.200" width="7.400" height="8.800" fill="#fafafa" stroke="#8a8a8a" stroke-width="0.6"/><path d="M102.600 30.200q.6-2.200 3-2l-.2-1l1.800 1.400l-1.800 1.400l.2-.9q-1.600-.2-2 1.100z M106.600 31q-.4 2.200-3 2l.2 1l-1.800-1.400l1.800-1.400l-.2.900q1.600.2 2-1.100z" fill="#18a028"/>
<rect x="111.200" y="25.800" width="9.600" height="9.800" fill="#fbfbfb" stroke="#d8d8d8" stroke-width="0.5"/>
<rect x="112.4" y="27.2" width="0.9" height="0.9" fill="#444"/>
<rect x="112.4" y="29.4" width="0.9" height="0.9" fill="#444"/>
<rect x="112.4" y="31.6" width="0.9" height="0.9" fill="#444"/>
<rect x="112.4" y="33.8" width="0.9" height="0.9" fill="#444"/>
<rect x="114.6" y="27.2" width="0.9" height="0.9" fill="#444"/>
<rect x="114.6" y="29.4" width="0.9" height="0.9" fill="#444"/>
<rect x="114.6" y="31.6" width="0.9" height="0.9" fill="#444"/>
<rect x="114.6" y="33.8" width="0.9" height="0.9" fill="#444"/>
<rect x="116.8" y="27.2" width="0.9" height="0.9" fill="#444"/>
<rect x="116.8" y="29.4" width="0.9" height="0.9" fill="#444"/>
<rect x="116.8" y="31.6" width="0.9" height="0.9" fill="#444"/>
<rect x="116.8" y="33.8" width="0.9" height="0.9" fill="#444"/>
<rect x="119.0" y="27.2" width="0.9" height="0.9" fill="#444"/>
<rect x="119.0" y="29.4" width="0.9" height="0.9" fill="#444"/>
<rect x="119.0" y="31.6" width="0.9" height="0.9" fill="#444"/>
<rect x="119.0" y="33.8" width="0.9" height="0.9" fill="#444"/>
<circle cx="130.800" cy="30.600" r="2.200" fill="#d8c020" stroke="#7a6a10" stroke-width="0.5"/><path d="M126.800 30.600h8M130.800 26.600v8" stroke="#333" stroke-width="0.7"/>
<path d="M146.600 26.400l1.800 2h-1.200v1.600h1.600v-1.200l2 1.800l-2 1.800v-1.200h-1.600v1.600h1.200l-1.800 2l-1.800-2h1.200v-1.600h-1.600v1.200l-2-1.800l2-1.800v1.200h1.600v-1.600h-1.200z" fill="#1848c8"/>
<circle cx="156.4" cy="29.6" r="2.700" fill="#e4e4e4" stroke="#7c7c7c" stroke-width="1"/><path d="M158.4 31.6l2.800 2.800" stroke="#7c7c7c" stroke-width="1.400"/>
<path d="M154.9 29.6h3M156.4 28.1v3" stroke="#444" stroke-width="0.7"/>
<circle cx="167.4" cy="29.6" r="2.700" fill="#e4e4e4" stroke="#7c7c7c" stroke-width="1"/><path d="M169.4 31.6l2.800 2.800" stroke="#7c7c7c" stroke-width="1.400"/>
<path d="M165.9 29.6h3" stroke="#444" stroke-width="0.7"/>
<circle cx="178.6" cy="29.6" r="2.700" fill="#e4e4e4" stroke="#7c7c7c" stroke-width="1"/><path d="M180.6 31.6l2.800 2.800" stroke="#7c7c7c" stroke-width="1.400"/>
<circle cx="178.6" cy="29.6" r="1.300" fill="#9a9a9a"/>
<rect x="187" y="27.600" width="5.400" height="6.600" fill="#fff" stroke="#aaa" stroke-width="0.5" stroke-dasharray="1 0.600"/>
<circle cx="190.8" cy="29.4" r="2.700" fill="#e4e4e4" stroke="#7c7c7c" stroke-width="1"/><path d="M192.8 31.4l2.800 2.800" stroke="#7c7c7c" stroke-width="1.400"/>
<path d="M209.800 34q4.600-.4 4-4.200q-.8-2.400-4.200-1.800" stroke="#969696" stroke-width="1.200" fill="none"/><path d="M207.200 28.400l3.200-2.200v4z" fill="#969696"/>
<path d="M223 34q-4.600-.4-4-4.200q.8-2.400 4.200-1.800" stroke="#a4a4a4" stroke-width="1.200" fill="none"/><path d="M225.600 28.400l-3.200-2.200v4z" fill="#a4a4a4"/>
<path d="M234.600 26.600l4.600 6M240 26.600l-4.600 6" stroke="#969696" stroke-width="1.100"/><circle cx="235.200" cy="33.400" r="1.300" fill="none" stroke="#969696" stroke-width="0.9"/><circle cx="239.400" cy="33.400" r="1.300" fill="none" stroke="#969696" stroke-width="0.9"/>
<rect x="244.600" y="26.800" width="4.600" height="5.200" fill="#e8e8e8" stroke="#7a7a7a" stroke-width="0.6"/><rect x="247.600" y="29" width="4.800" height="5.400" fill="#f4f4f4" stroke="#5a6a9a" stroke-width="0.6"/><path d="M248.600 30.600h2.800M248.600 32h2.800" stroke="#6a7aaa" stroke-width="0.4"/>
<rect x="255.800" y="27.400" width="6" height="7" fill="#969696"/><rect x="257.600" y="26.400" width="2.400" height="1.600" fill="#7a7a7a"/><rect x="259.400" y="30" width="4.400" height="4.600" fill="#9a9a9a" stroke="#eee" stroke-width="0.3"/>
<rect x="270.8" y="31" width="8.200" height="3.800" fill="#969696"/><rect x="273.0" y="26.600" width="3.800" height="2.200" fill="#969696"/><path d="M271.8 30.200h6.200" stroke="#969696" stroke-width="0.9"/><path d="M274.90000000000003 28.800v1.400" stroke="#969696" stroke-width="1"/>
<rect x="282.1" y="31" width="8.200" height="3.800" fill="#969696"/><rect x="284.3" y="26.600" width="3.800" height="2.200" fill="#969696"/><path d="M283.1 30.200h6.200" stroke="#969696" stroke-width="0.9"/><path d="M286.20000000000005 28.800v1.400" stroke="#969696" stroke-width="1"/>
<rect x="293.200" y="26.800" width="8" height="8" fill="#969696"/><rect x="304" y="26.800" width="8.400" height="8" fill="#969696"/>
<circle cx="322.800" cy="29.800" r="2.700" fill="#b0b0b0" stroke="#969696" stroke-width="1"/><path d="M324.800 31.800l2.800 2.800" stroke="#969696" stroke-width="1.500"/>
<path d="M332 34l2.600-5.600l4.400 2.600z" fill="#969696"/><path d="M337 26.600v3M335.600 28h3" stroke="#969696" stroke-width="0.8"/><path d="M331.200 30.400h2.400" stroke="#969696" stroke-width="0.8"/>
<path d="M342 29.400l5.200-1.600l2.800 1.400v4.200l-5.200 1.400l-2.800-1.400z" fill="#969696"/><path d="M346.600 26.600l2.600 1.200" stroke="#969696" stroke-width="0.9"/>
<path d="M353.400 34.400l5-5.400" stroke="#969696" stroke-width="1.200"/><path d="M356.600 27l2-1l2.200 2.600l-1.200 1.200z" fill="#969696"/>
<rect x="372" y="25.800" width="9" height="9.600" fill="#f8f8f8" stroke="#b8b8b8" stroke-width="0.5"/><path d="M374 28h3q2 0 1 2t-2 1.600q-2 .6-1 2.400h3.600" stroke="#2060d0" stroke-width="1" fill="none"/><path d="M373.600 27.200h2.200" stroke="#20a840" stroke-width="1.400"/><path d="M377.800 34h2" stroke="#20a840" stroke-width="1.400"/><circle cx="375.400" cy="32" r="1.100" fill="#e04020"/>
</svg>
<svg width="20" height="477">
<path d="M5 45.600v7l1.700-1.600l1.300 2.800l1.100-.5l-1.300-2.700h2.300z" fill="#111"/>
<path d="M3.400 57v6.400l5.800-3.200z" fill="#e8d020" stroke="#7a6a10" stroke-width="0.5"/><path d="M2 58.600h1.400M2 61.800h1.400M9.200 60.200h1.800" stroke="#555" stroke-width="0.6"/>
<circle cx="6.300" cy="72" r="2.100" fill="#2050c8"/><path d="M2.400 72h7.800M6.300 68.200v7.600" stroke="#6080c0" stroke-width="0.6"/>
<rect x="2.300" y="81" width="8.800" height="5.200" fill="#e0e8f8" stroke="#6078b0" stroke-width="0.5"/><text x="6.700" y="85.300" font-size="4.200" fill="#3050a0" text-anchor="middle" font-weight="bold" letter-spacing="-0.2" style="font-family:'Liberation Sans',sans-serif">LBL</text>
<path d="M4 92.600h5.600M4 94.400h5.600M4 96.200h5.600M4 98h5.600" stroke="#666" stroke-width="0.7" stroke-dasharray="1.400 0.500"/>
<path d="M2.600 107.200h8.400" stroke="#1848c8" stroke-width="1.600"/><path d="M4.400 104.600v5.400M8.800 104.600v5.400" stroke="#1848c8" stroke-width="1"/>
<rect x="3.800" y="114.800" width="5" height="7.800" rx="1" fill="#e8d020" stroke="#8a7a10" stroke-width="0.5"/><path d="M2.400 117h1.400M2.400 120h1.400M8.800 117h1.400M8.800 120h1.400" stroke="#555" stroke-width="0.6"/>
<path d="M1.500 126h11.500" stroke="#d0d0d0" stroke-width="0.7"/>
<path d="M3 130.600h4l2.200 1.600l-2.200 1.600h-4z" fill="#e8d020" stroke="#8a7a10" stroke-width="0.500"/><path d="M9.200 132.200h2" stroke="#555" stroke-width="0.600"/>
<path d="M4.400 141v5l4-2.500z" fill="#fff" stroke="#555" stroke-width="0.600"/><path d="M2.400 143.500h2M8.400 143.500h2.400" stroke="#555" stroke-width="0.600"/>
<path d="M3 151.600v7h8" stroke="#333" stroke-width="0.700" fill="none"/><path d="M3.600 157l2-3l1.600 1.800l2.600-3.800" stroke="#2050d0" stroke-width="0.700" fill="none"/><path d="M3.600 155l2.200 1.800l2-1.200l2 1" stroke="#d03030" stroke-width="0.600" fill="none"/>
<rect x="2.400" y="164.200" width="8.400" height="5.400" rx="0.800" fill="#8a8a8a" stroke="#444" stroke-width="0.500"/><circle cx="4.800" cy="166.800" r="1" fill="#e8e8e8"/><circle cx="8.400" cy="166.800" r="1" fill="#e8e8e8"/>
<circle cx="6.400" cy="178.600" r="3.600" fill="#3070c8" stroke="#183878" stroke-width="0.500"/><path d="M3.800 178.600q1.300-3 2.600 0t2.600 0" stroke="#fff" stroke-width="0.700" fill="none"/>
<path d="M3 194.0l5.600-5.600l1.400 1.400l-5.600 5.600z" fill="#e8c838" stroke="#7a6a20" stroke-width="0.400"/><path d="M3 194.0l-.6 2l2-.6z" fill="#333"/><path d="M8.800 187.6l1.800 1.800" stroke="#2858c8" stroke-width="1.100"/>
<path d="M3 205.2l5.600-5.600l1.400 1.400l-5.600 5.600z" fill="#e8c838" stroke="#7a6a20" stroke-width="0.400"/><path d="M3 205.2l-.6 2l2-.6z" fill="#333"/><path d="M8.800 198.79999999999998l1.800 1.800" stroke="#2858c8" stroke-width="1.100"/>
<rect x="2.600" y="210.800" width="8" height="5.600" rx="0.600" fill="#e8e8f0" stroke="#445" stroke-width="0.700"/><path d="M3.800 214.600l1.600-2l1.400 1.600l1.600-2" stroke="#d02020" stroke-width="0.600" fill="none"/><path d="M4.600 218h4M6.600 216.400v1.600" stroke="#445" stroke-width="0.700"/>
<path d="M2.200 230l8.400-7.600" stroke="#222" stroke-width="0.800"/>
<rect x="3" y="235.600" width="6.800" height="6.400" fill="#4a98a8" stroke="#2a5a68" stroke-width="0.500"/>
<circle cx="6.300" cy="251" r="3.500" fill="#4a98a8" stroke="#2a5a68" stroke-width="0.500"/>
<path d="M3.400 259.400q6.400 0 6.400 6.400h-6.400z" fill="#fff" stroke="#6a7a9a" stroke-width="0.600"/>
<path d="M3.400 272.400q1.600-1.600 3 0q1.400-1.600 3 0q1 2.400 0 4.600q-1.600 1.400-3 0q-1.400 1.400-3 0q-1-2.400 0-4.600z" fill="#4a98a8" stroke="#2a5a68" stroke-width="0.400"/>
<text x="6.300" y="290" font-size="9" fill="#111" text-anchor="middle" font-weight="bold" style="font-family:'Liberation Serif',serif">A</text>
<rect x="3" y="295.400" width="6.800" height="5.600" fill="#203058" stroke="#101830" stroke-width="0.400"/><path d="M4.200 297h4.400M4.200 299h3" stroke="#8aa0d0" stroke-width="0.600"/>
<circle cx="6.300" cy="309.400" r="1.700" fill="#4a98a8"/><path d="M2.800 309.400h7M6.300 305.900v7" stroke="#3a7888" stroke-width="0.700"/>
<path d="M1.500 321.200h11.500" stroke="#c8c8c8" stroke-width="0.700"/>
<path d="M8.800 327.400a3 3 0 1 0 .7 3" stroke="#2040b8" stroke-width="1.100" fill="none"/><path d="M7.200 327.800l3-.2l-.6-2.600z" fill="#2040b8"/>
<path d="M4 339a3 3 0 1 1-.7 3" stroke="#2040b8" stroke-width="1.100" fill="none"/><path d="M5.600 339.400l-3-.2l.6-2.600z" fill="#2040b8"/>
<rect x="1.200" y="348.200" width="12" height="8" fill="#fff" stroke="#8a8a8a" stroke-width="0.600"/><text x="2.200" y="354.400" font-size="5.400" fill="#222" style="font-family:'Liberation Sans',sans-serif">0°</text>
<path d="M2.400 366.400l2.600-2.200v1.400h2.800v-1.400l2.600 2.200l-2.600 2.200v-1.400h-2.800v1.400z" fill="#2040b8"/>
<path d="M6.400 374l2.200 2.600h-1.400v3.400h1.400l-2.200 2.600l-2.200-2.600h1.400v-3.400h-1.400z" fill="#2040b8"/>
</svg>
<div style="left:0;top:442px;width:848px;height:15px;background:#f0f0f0;"></div>
<div style="left:4.5px;top:444.4px;width:84.2px;height:9.8px;background:#f2f2f2;border:1px solid #3c3c3c;"></div>
<div style="left:26.0px;top:444.4px;width:1px;height:9.8px;background:#3c3c3c;"></div>
<div style="left:46.6px;top:444.4px;width:1px;height:9.8px;background:#3c3c3c;"></div>
<div style="left:67.3px;top:444.4px;width:1px;height:9.8px;background:#3c3c3c;"></div>
<div style="left:91px;top:444px;width:53px;height:10.5px;background:#f0f0f0;border:1px solid #c8c8c8;border-bottom-color:#fff;border-right-color:#fff;"></div>
<svg width="160" height="477"><path d="M14.2 446.5v5.8l4.1-2.9z" fill="#18961a"/><path d="M34.5 446.4v6" stroke="#111" stroke-width="1.2"/><path d="M35.9 446.4v6l4.2-3z" fill="#111"/><path d="M55.6 446.5v5.8M58.6 446.5v5.800" stroke="#dc6414" stroke-width="1.3"/><rect x="75.1" y="446.900" width="5.400" height="5.200" fill="#111"/><circle cx="96.6" cy="449.2" r="3.5" fill="#1a8a1a" stroke="#0c500c" stroke-width="0.5"/><rect x="96.1" y="448.6" width="1" height="2.6" fill="#fff"/><rect x="96.1" y="447" width="1" height="1" fill="#fff"/></svg>
<div class="t" style="left:105.50px;top:445.50px;font-size:6.4px;line-height:7.36px;color:#1a1a1a;transform:scaleX(0.8770);transform-origin:0 0;">2 Message(s)</div>
<div style="left:150px;top:444px;width:239px;height:10.5px;background:#f4f4f4;border:1px solid #c0c0c0;border-bottom-color:#fff;border-right-color:#fff;"></div>
<div class="t" style="left:153.00px;top:445.60px;font-size:6.2px;line-height:7.13px;color:#a0543c;transform:scaleX(0.9263);transform-origin:0 0;">PAUSED: 00:00:08.950000</div>
<div style="left:755px;top:444.4px;width:20px;height:9.6px;background:#f4f4f4;border:1px solid #c8c8c8;border-bottom-color:#fff;border-right-color:#fff;"></div>
<div style="left:778.5px;top:444.4px;width:69px;height:9.6px;background:#f4f4f4;border:1px solid #c8c8c8;border-bottom-color:#fff;"></div>
<div style="left:382.3px;top:0;width:400.7px;height:292px;background:#fff;border-left:1px solid #9aa0a6;border-right:1px solid #b8b8b8;border-bottom:1px solid #9a9a9a;box-shadow:0 1px 4px rgba(0,0,0,0.22);"></div>
<div style="left:383.3px;top:241.5px;width:6px;height:10px;background:#e4e4e4;border:1px solid #adadad;"></div>
<div class="t" style="left:385.20px;top:4.20px;font-size:7.5px;line-height:8.62px;color:#9a9a9a;transform:scaleX(0.7937);transform-origin:0 0;">SPI Debug - Monitor mode - $ISPI DEBUGGER#0017</div>
<div style="left:771px;top:4.5px;width:10px;height:9.5px;background:#e4e4e4;"></div>
<svg width="848" height="20"><path d="M774.8 8l2.4 2.4M777.2 8l-2.4 2.4" stroke="#fafafa" stroke-width="0.9"/></svg>
<div style="left:383.3px;top:18px;width:270.7px;height:198px;background:#fff;border:1px solid #7a7a7a;border-right-color:#c8c8c8;border-bottom-color:#b0b0b0;"></div>
<div style="left:385px;top:19px;width:268px;height:1px;background:#c0c0c0;"></div>
<div style="left:644px;top:20px;width:9px;height:195px;background:#f3f3f3;"></div>
<svg width="848" height="40"><path d="M646.3 25.6l1.7-1.9l1.7 1.9" stroke="#555" stroke-width="0.8" fill="none"/></svg>
<div style="left:657px;top:18px;width:123px;height:241px;background:#fff;border:1px solid #6f6f6f;border-right-color:#dcdcdc;border-bottom-color:#dcdcdc;"></div>
<div style="left:658px;top:19px;width:122px;height:10px;background:#f0f0f0;border-bottom:1px solid #6f6f6f;border-right:1px solid #6f6f6f;"></div>
<div class="t" style="left:661.40px;top:20.30px;font-size:7.4px;line-height:8.51px;color:#111;transform:scaleX(0.8146);transform-origin:0 0;">Predefined Sequences</div>
<div style="left:700px;top:262px;width:80px;height:11px;background:#fff;border:1px solid #8a8a8a;"></div>
<div style="left:770px;top:263px;width:9px;height:9px;background:#e8e8e8;border:1px solid #9a9a9a;"></div>
<svg width="848" height="300"><path d="M772.4 266.6h4.4l-2.2 2.6z" fill="#111"/></svg>
<div style="left:740px;top:277px;width:40px;height:13px;background:#f0f0f0;border:1px solid #c4c4c4;border-bottom-color:#a8a8a8;border-right-color:#a8a8a8;"></div>
<div class="t" style="left:753px;top:279.3px;font-size:7.5px;line-height:9px;color:#b4b4b4;">Delete</div>
<svg width="848" height="230">
<path d="M388.6 23.9V210.9 M388.6 23.9H393 M388.6 202.4H393 M388.6 210.9H393" stroke="#b8b8b8" stroke-width="0.7" fill="none"/>
<path d="M398.4 43.9V125.9 M398.4 49.4H403 M398.4 125.9H403" stroke="#b8b8b8" stroke-width="0.7" fill="none"/>
<path d="M408.6 52.4V117.4 M408.6 128.9V193.9" stroke="#b8b8b8" stroke-width="0.7" fill="none"/>
<circle cx="397.6" cy="23.9" r="3.3" fill="#00e800" stroke="#1a8a1a" stroke-width="0.7"/>
<path d="M394.0 31.299999999999997h3.6v-2.1l3.9 3.2l-3.9 3.2v-2.1h-3.6z" fill="#30b8d8" stroke="#207890" stroke-width="0.4"/>
<path d="M401.5 39.699999999999996h-3.7v-2.2l-4.1 3.4l4.1 3.4v-2.2h3.7z" fill="#0808d0"/>
<path d="M411.4 48.199999999999996h-3.7v-2.2l-4.1 3.4l4.1 3.4v-2.2h3.7z" fill="#0808d0"/>
<path d="M408.6 57.9H413" stroke="#b8b8b8" stroke-width="0.7"/>
<path d="M421.59999999999997 56.699999999999996h-3.7v-2.2l-4.1 3.4l4.1 3.4v-2.2h3.7z" fill="#0808d0"/>
<path d="M408.6 66.4H413" stroke="#b8b8b8" stroke-width="0.7"/>
<path d="M421.59999999999997 65.2h-3.7v-2.2l-4.1 3.4l4.1 3.4v-2.2h3.7z" fill="#0808d0"/>
<path d="M408.6 74.9H413" stroke="#b8b8b8" stroke-width="0.7"/>
<path d="M421.59999999999997 73.7h-3.7v-2.2l-4.1 3.4l4.1 3.4v-2.2h3.7z" fill="#0808d0"/>
<path d="M408.6 83.4H413" stroke="#b8b8b8" stroke-width="0.7"/>
<path d="M421.59999999999997 82.2h-3.7v-2.2l-4.1 3.4l4.1 3.4v-2.2h3.7z" fill="#0808d0"/>
<path d="M408.6 91.9H413" stroke="#b8b8b8" stroke-width="0.7"/>
<path d="M421.59999999999997 90.7h-3.7v-2.2l-4.1 3.4l4.1 3.4v-2.2h3.7z" fill="#0808d0"/>
<path d="M408.6 100.4H413" stroke="#b8b8b8" stroke-width="0.7"/>
<path d="M421.59999999999997 99.2h-3.7v-2.2l-4.1 3.4l4.1 3.4v-2.2h3.7z" fill="#0808d0"/>
<path d="M408.6 108.9H413" stroke="#b8b8b8" stroke-width="0.7"/>
<path d="M421.59999999999997 107.7h-3.7v-2.2l-4.1 3.4l4.1 3.4v-2.2h3.7z" fill="#0808d0"/>
<path d="M408.6 117.4H413" stroke="#b8b8b8" stroke-width="0.7"/>
<path d="M421.59999999999997 116.2h-3.7v-2.2l-4.1 3.4l4.1 3.4v-2.2h3.7z" fill="#0808d0"/>
<path d="M411.4 124.7h-3.7v-2.2l-4.1 3.4l4.1 3.4v-2.2h3.7z" fill="#0808d0"/>
<path d="M408.6 134.4H413" stroke="#b8b8b8" stroke-width="0.7"/>
<path d="M421.59999999999997 133.20000000000002h-3.7v-2.2l-4.1 3.4l4.1 3.4v-2.2h3.7z" fill="#0808d0"/>
<path d="M408.6 142.9H413" stroke="#b8b8b8" stroke-width="0.7"/>
<path d="M421.59999999999997 141.70000000000002h-3.7v-2.2l-4.1 3.4l4.1 3.4v-2.2h3.7z" fill="#0808d0"/>
<path d="M408.6 151.4H413" stroke="#b8b8b8" stroke-width="0.7"/>
<path d="M421.59999999999997 150.20000000000002h-3.7v-2.2l-4.1 3.4l4.1 3.4v-2.2h3.7z" fill="#0808d0"/>
<path d="M408.6 159.9H413" stroke="#b8b8b8" stroke-width="0.7"/>
<path d="M421.59999999999997 158.70000000000002h-3.7v-2.2l-4.1 3.4l4.1 3.4v-2.2h3.7z" fill="#0808d0"/>
<path d="M408.6 168.4H413" stroke="#b8b8b8" stroke-width="0.7"/>
<path d="M421.59999999999997 167.20000000000002h-3.7v-2.2l-4.1 3.4l4.1 3.4v-2.2h3.7z" fill="#0808d0"/>
<path d="M408.6 176.9H413" stroke="#b8b8b8" stroke-width="0.7"/>
<path d="M421.59999999999997 175.70000000000002h-3.7v-2.2l-4.1 3.4l4.1 3.4v-2.2h3.7z" fill="#0808d0"/>
<path d="M408.6 185.4H413" stroke="#b8b8b8" stroke-width="0.7"/>
<path d="M421.59999999999997 184.20000000000002h-3.7v-2.2l-4.1 3.4l4.1 3.4v-2.2h3.7z" fill="#0808d0"/>
<path d="M408.6 193.9H413" stroke="#b8b8b8" stroke-width="0.7"/>
<path d="M421.59999999999997 192.70000000000002h-3.7v-2.2l-4.1 3.4l4.1 3.4v-2.2h3.7z" fill="#0808d0"/>
<circle cx="397.6" cy="202.4" r="3.3" fill="#18c018" stroke="#0a3a0a" stroke-width="0.9"/><path d="M395.40000000000003 200.20000000000002l4.4 4.4M399.8 200.20000000000002l-4.4 4.4" stroke="#0a2a0a" stroke-width="1"/>
<circle cx="397.6" cy="210.9" r="3.3" fill="#00e800" stroke="#1a8a1a" stroke-width="0.7"/>
<rect x="386.5" y="30.299999999999997" width="4.2" height="4.2" fill="#fff" stroke="#888" stroke-width="0.6"/>
<path d="M387.40000000000003 32.4h2.4" stroke="#222" stroke-width="0.6"/>
<path d="M388.6 31.2v2.4" stroke="#222" stroke-width="0.6"/>
<rect x="386.5" y="38.8" width="4.2" height="4.2" fill="#fff" stroke="#888" stroke-width="0.6"/>
<path d="M387.40000000000003 40.9h2.4" stroke="#222" stroke-width="0.6"/>
<rect x="396.29999999999995" y="47.3" width="4.2" height="4.2" fill="#fff" stroke="#888" stroke-width="0.6"/>
<path d="M397.2 49.4h2.4" stroke="#222" stroke-width="0.6"/>
<rect x="396.29999999999995" y="123.80000000000001" width="4.2" height="4.2" fill="#fff" stroke="#888" stroke-width="0.6"/>
<path d="M397.2 125.9h2.4" stroke="#222" stroke-width="0.6"/>
</svg>
<div class="t m" style="left:412.8px;top:21.00px;font-size:6.12px;line-height:7px;color:#2c2c2c;-webkit-text-stroke:0.12px #3a3a3a;">0.044&nbsp;s&nbsp;SS&nbsp;Active</div>
<div class="t m" style="left:412.8px;top:29.50px;font-size:6.12px;line-height:7px;color:#2c2c2c;-webkit-text-stroke:0.12px #3a3a3a;">0.047&nbsp;s&nbsp;&nbsp;&nbsp;0.001&nbsp;s&nbsp;&nbsp;00&nbsp;00</div>
<div class="t m" style="left:412.8px;top:38.00px;font-size:6.12px;line-height:7px;color:#2c2c2c;-webkit-text-stroke:0.12px #3a3a3a;">0.047&nbsp;s&nbsp;&nbsp;&nbsp;0.001&nbsp;s&nbsp;&nbsp;22&nbsp;FE</div>
<div class="t m" style="left:422.8px;top:46.50px;font-size:6.12px;line-height:7px;color:#2c2c2c;-webkit-text-stroke:0.12px #3a3a3a;">0.047&nbsp;s&nbsp;&nbsp;&nbsp;0.061&nbsp;s&nbsp;22</div>
<div class="t m" style="left:432.9px;top:55.00px;font-size:6.12px;line-height:7px;color:#2c2c2c;-webkit-text-stroke:0.12px #3a3a3a;">0.047&nbsp;s&nbsp;Bit&nbsp;7&nbsp;&nbsp;DIN=0&nbsp;(WLO)</div>
<div class="t m" style="left:432.9px;top:63.50px;font-size:6.12px;line-height:7px;color:#2c2c2c;-webkit-text-stroke:0.12px #3a3a3a;">0.049&nbsp;s&nbsp;Bit&nbsp;6&nbsp;&nbsp;DIN=0&nbsp;(WLO)</div>
<div class="t m" style="left:432.9px;top:72.00px;font-size:6.12px;line-height:7px;color:#2c2c2c;-webkit-text-stroke:0.12px #3a3a3a;">0.051&nbsp;s&nbsp;Bit&nbsp;5&nbsp;&nbsp;DIN=1&nbsp;(WHI)</div>
<div class="t m" style="left:432.9px;top:80.50px;font-size:6.12px;line-height:7px;color:#2c2c2c;-webkit-text-stroke:0.12px #3a3a3a;">0.053&nbsp;s&nbsp;Bit&nbsp;4&nbsp;&nbsp;DIN=0&nbsp;(WLO)</div>
<div class="t m" style="left:432.9px;top:89.00px;font-size:6.12px;line-height:7px;color:#2c2c2c;-webkit-text-stroke:0.12px #3a3a3a;">0.055&nbsp;s&nbsp;Bit&nbsp;3&nbsp;&nbsp;DIN=0&nbsp;(WLO)</div>
<div class="t m" style="left:432.9px;top:97.50px;font-size:6.12px;line-height:7px;color:#2c2c2c;-webkit-text-stroke:0.12px #3a3a3a;">0.057&nbsp;s&nbsp;Bit&nbsp;2&nbsp;&nbsp;DIN=0&nbsp;(WLO)</div>
<div class="t m" style="left:432.9px;top:106.00px;font-size:6.12px;line-height:7px;color:#2c2c2c;-webkit-text-stroke:0.12px #3a3a3a;">0.059&nbsp;s&nbsp;Bit&nbsp;1&nbsp;&nbsp;DIN=1&nbsp;(WHI)</div>
<div class="t m" style="left:432.9px;top:114.50px;font-size:6.12px;line-height:7px;color:#2c2c2c;-webkit-text-stroke:0.12px #3a3a3a;">0.061&nbsp;s&nbsp;Bit&nbsp;0&nbsp;&nbsp;DIN=0&nbsp;(WLO)</div>
<div class="t m" style="left:422.8px;top:123.00px;font-size:6.12px;line-height:7px;color:#2c2c2c;-webkit-text-stroke:0.12px #3a3a3a;">0.067&nbsp;s&nbsp;&nbsp;&nbsp;0.081&nbsp;s&nbsp;FE</div>
<div class="t m" style="left:432.9px;top:131.50px;font-size:6.12px;line-height:7px;color:#2c2c2c;-webkit-text-stroke:0.12px #3a3a3a;">0.067&nbsp;s&nbsp;Bit&nbsp;7&nbsp;&nbsp;DIN=1&nbsp;(WHI)</div>
<div class="t m" style="left:432.9px;top:140.00px;font-size:6.12px;line-height:7px;color:#2c2c2c;-webkit-text-stroke:0.12px #3a3a3a;">0.069&nbsp;s&nbsp;Bit&nbsp;6&nbsp;&nbsp;DIN=1&nbsp;(WHI)</div>
<div class="t m" style="left:432.9px;top:148.50px;font-size:6.12px;line-height:7px;color:#2c2c2c;-webkit-text-stroke:0.12px #3a3a3a;">0.071&nbsp;s&nbsp;Bit&nbsp;5&nbsp;&nbsp;DIN=1&nbsp;(WHI)</div>
<div class="t m" style="left:432.9px;top:157.00px;font-size:6.12px;line-height:7px;color:#2c2c2c;-webkit-text-stroke:0.12px #3a3a3a;">0.073&nbsp;s&nbsp;Bit&nbsp;4&nbsp;&nbsp;DIN=1&nbsp;(WHI)</div>
<div class="t m" style="left:432.9px;top:165.50px;font-size:6.12px;line-height:7px;color:#2c2c2c;-webkit-text-stroke:0.12px #3a3a3a;">0.075&nbsp;s&nbsp;Bit&nbsp;3&nbsp;&nbsp;DIN=1&nbsp;(WHI)</div>
<div class="t m" style="left:432.9px;top:174.00px;font-size:6.12px;line-height:7px;color:#2c2c2c;-webkit-text-stroke:0.12px #3a3a3a;">0.077&nbsp;s&nbsp;Bit&nbsp;2&nbsp;&nbsp;DIN=1&nbsp;(WHI)</div>
<div class="t m" style="left:432.9px;top:182.50px;font-size:6.12px;line-height:7px;color:#2c2c2c;-webkit-text-stroke:0.12px #3a3a3a;">0.079&nbsp;s&nbsp;Bit&nbsp;1&nbsp;&nbsp;DIN=1&nbsp;(WHI)</div>
<div class="t m" style="left:432.9px;top:191.00px;font-size:6.12px;line-height:7px;color:#2c2c2c;-webkit-text-stroke:0.12px #3a3a3a;">0.081&nbsp;s&nbsp;Bit&nbsp;0&nbsp;&nbsp;DIN=0&nbsp;(WLO)</div>
<div class="t m" style="left:412.8px;top:199.50px;font-size:6.12px;line-height:7px;color:#2c2c2c;-webkit-text-stroke:0.12px #3a3a3a;">0.083&nbsp;s&nbsp;SS&nbsp;Inactive</div>
<div class="t m" style="left:412.8px;top:208.00px;font-size:6.12px;line-height:7px;color:#2c2c2c;-webkit-text-stroke:0.12px #3a3a3a;">0.084&nbsp;s&nbsp;SS&nbsp;Active</div>
<div style="left:388px;top:215px;width:366.2px;height:242px;background:#fff;border:1px solid #8f8f8f;border-top-color:#b0b0b0;box-shadow:0 1px 5px rgba(0,0,0,0.35);"></div>
<div class="t" style="left:390.30px;top:219.00px;font-size:7.5px;line-height:8.62px;color:#111;transform:scaleX(0.8419);transform-origin:0 0;">Digital Oscilloscope</div>
<div style="left:743.6px;top:217.6px;width:9.6px;height:9.8px;background:#c8352e;"></div>
<svg width="848" height="240"><path d="M747.2 221.3l2.4 2.4M749.6 221.3l-2.4 2.4" stroke="#fff" stroke-width="0.9"/></svg>
<div style="left:390.0px;top:230.20000000000002px;width:212.60px;height:213.20px;background:#000;"></div>
<svg width="848" height="477">
<path d="M400.63 230.8V443.40M390.0 241.43H602.60M411.26 230.8V443.40M390.0 252.06H602.60M421.89 230.8V443.40M390.0 262.69H602.60M432.52 230.8V443.40M390.0 273.32H602.60M443.15 230.8V443.40M390.0 283.95H602.60M453.78 230.8V443.40M390.0 294.58H602.60M464.41 230.8V443.40M390.0 305.21H602.60M475.04 230.8V443.40M390.0 315.84H602.60M485.67 230.8V443.40M390.0 326.47H602.60M496.30 230.8V443.40M390.0 337.10H602.60M506.93 230.8V443.40M390.0 347.73H602.60M517.56 230.8V443.40M390.0 358.36H602.60M528.19 230.8V443.40M390.0 368.99H602.60M538.82 230.8V443.40M390.0 379.62H602.60M549.45 230.8V443.40M390.0 390.25H602.60M560.08 230.8V443.40M390.0 400.88H602.60M570.71 230.8V443.40M390.0 411.51H602.60M581.34 230.8V443.40M390.0 422.14H602.60M591.97 230.8V443.40M390.0 432.77H602.60" stroke="#0a3a0a" stroke-width="0.75" fill="none"/>
<path d="M390.0 325.3H601.60" stroke="#6a6a6a" stroke-width="0.9"/>
<path d="M433.6 230.8V443.40" stroke="#8c8c8c" stroke-width="0.9"/>
<path d="M390.0 262.9H407.00V273.5H412.31V262.9H417.63V273.5H422.94V262.9H428.26V273.5H433.57V262.9H438.89V273.5H444.20V262.9H449.52V273.5H454.83V262.9H460.15V273.5H465.46V262.9H470.78V273.5H476.09V262.9H481.41V273.5H486.73V262.9H513.30V273.5H518.62V262.9H523.93V273.5H529.25V262.9H534.56V273.5H539.88V262.9H545.19V273.5H550.50V262.9H555.82V273.5H561.13V262.9H566.45V273.5H571.76V262.9H577.08V273.5H582.39V262.9H587.71V273.5H593.02V262.9H602.60" stroke="#c8c020" stroke-width="1" fill="none"/>
<path d="M390.0 316.3H433.6V305.4H444.6V316.3H476.1V305.4H487V316.3H507.7V305.4H593V316.3H602.60" stroke="#1898b0" stroke-width="1" fill="none"/>
<path d="M390.0 347.9H391.4V358.2H492.4V347.9H497.3V358.2H598.3V347.9H602.60" stroke="#a83058" stroke-width="1" fill="none"/>
<path d="M391.4 400.9V390.4H396.4V400.9H602.60" stroke="#14922c" stroke-width="1" fill="none"/>
<text x="435.3" y="322.3" font-size="4.6" fill="#8a8a8a" style="font-family:'Liberation Sans',sans-serif">-32.10 mS</text>
</svg>
<div style="left:390.0px;top:445px;width:212.60px;height:9px;background:#f4f4f4;border:1px solid #d0d0d0;"></div>
<div style="left:390.5px;top:445.6px;width:7.5px;height:7.8px;background:#e8e8e8;border:1px solid #b8b8b8;"></div>
<div style="left:595px;top:445.6px;width:7.5px;height:7.8px;background:#e8e8e8;border:1px solid #b8b8b8;"></div>
<div style="left:589px;top:445.6px;width:6px;height:7.8px;background:#e8e8e8;border:1px solid #c8c8c8;"></div>
<svg width="848" height="477"><path d="M395.3 447.6v3.8l-2.4-1.9z M597.6 447.6v3.8l2.4-1.9z" fill="#111"/></svg>
<div style="left:602.5999999999999px;top:230.0px;width:2.2px;height:227.0px;background:#b8b8b8;"></div>
<div style="left:604.8px;top:230.0px;width:148.2px;height:227.0px;background:#a8a7a7;"></div>
<svg width="848" height="477">
<defs>
<linearGradient id="wv" x1="0" y1="0" x2="0" y2="1"><stop offset="0" stop-color="#383838"/><stop offset="0.12" stop-color="#6c6c6c"/><stop offset="0.3" stop-color="#9e9e9e"/><stop offset="0.44" stop-color="#f0f0f0"/><stop offset="0.5" stop-color="#ffffff"/><stop offset="0.56" stop-color="#f0f0f0"/><stop offset="0.7" stop-color="#9a9a9a"/><stop offset="0.88" stop-color="#686868"/><stop offset="1" stop-color="#343434"/></linearGradient>
<linearGradient id="wh" x1="0" y1="0" x2="1" y2="0"><stop offset="0" stop-color="#383838"/><stop offset="0.12" stop-color="#6c6c6c"/><stop offset="0.3" stop-color="#9e9e9e"/><stop offset="0.44" stop-color="#f0f0f0"/><stop offset="0.5" stop-color="#ffffff"/><stop offset="0.56" stop-color="#f0f0f0"/><stop offset="0.7" stop-color="#9a9a9a"/><stop offset="0.88" stop-color="#686868"/><stop offset="1" stop-color="#343434"/></linearGradient>
<linearGradient id="rail" x1="0" y1="0" x2="1" y2="0"><stop offset="0" stop-color="#8a8a8a"/><stop offset="0.5" stop-color="#c4c4c4"/><stop offset="1" stop-color="#808080"/></linearGradient>
<linearGradient id="railh" x1="0" y1="0" x2="0" y2="1"><stop offset="0" stop-color="#8a8a8a"/><stop offset="0.5" stop-color="#c4c4c4"/><stop offset="1" stop-color="#808080"/></linearGradient>
<radialGradient id="kn" cx="0.35" cy="0.3" r="0.8"><stop offset="0" stop-color="#c8c8c8"/><stop offset="0.55" stop-color="#8e8e8e"/><stop offset="1" stop-color="#5a5a5a"/></radialGradient>
<linearGradient id="cap" x1="0.15" y1="0.1" x2="0.85" y2="0.9"><stop offset="0" stop-color="#f4f4f4"/><stop offset="0.45" stop-color="#b8b8b8"/><stop offset="1" stop-color="#6e6e6e"/></linearGradient>
</defs>
<path d="M605.1999999999999 230.0V457" stroke="#6a6a6a" stroke-width="0.8"/><path d="M606.0 230.0V457" stroke="#cdcdcd" stroke-width="0.8"/>
<path d="M604.8 243.4H753.0" stroke="#5a5a5a" stroke-width="1"/><path d="M604.8 244.4H753.0" stroke="#c0c0c0" stroke-width="0.6"/>
<path d="M604.8 341.6H753.0" stroke="#5a5a5a" stroke-width="1"/><path d="M604.8 342.6H753.0" stroke="#c0c0c0" stroke-width="0.6"/>
<path d="M604.8 355.5H753.0" stroke="#5a5a5a" stroke-width="1"/><path d="M604.8 356.5H753.0" stroke="#c0c0c0" stroke-width="0.6"/>
<path d="M604.8 230.4H753.0" stroke="#6a6a6a" stroke-width="0.8"/>
<path d="M653.6 230.0V457" stroke="#555" stroke-width="1.1"/><path d="M654.6 230.0V457" stroke="#bdbdbd" stroke-width="0.6"/>
<path d="M703.6 230.0V457" stroke="#555" stroke-width="1.1"/><path d="M704.6 230.0V457" stroke="#bdbdbd" stroke-width="0.6"/>
<text transform="translate(616.30 239.80) scale(0.936 1)" font-size="7.0" font-weight="bold" fill="#e89494" style="font-family:'Liberation Sans',sans-serif">Trigger</text>
<text transform="translate(663.15 239.50) scale(0.882 1)" font-size="7.0" font-weight="bold" fill="#f8f018" style="font-family:'Liberation Sans',sans-serif">Channel A</text>
<text transform="translate(713.05 239.50) scale(0.875 1)" font-size="7.0" font-weight="bold" fill="#e8188c" style="font-family:'Liberation Sans',sans-serif">Channel C</text>
<text transform="translate(611.65 351.80) scale(0.944 1)" font-size="7.0" font-weight="bold" fill="#e08838" style="font-family:'Liberation Sans',sans-serif">Horizontal</text>
<text transform="translate(663.30 351.80) scale(0.872 1)" font-size="7.0" font-weight="bold" fill="#2c90e0" style="font-family:'Liberation Sans',sans-serif">Channel B</text>
<text transform="translate(713.10 351.80) scale(0.872 1)" font-size="7.0" font-weight="bold" fill="#18a040" style="font-family:'Liberation Sans',sans-serif">Channel D</text>
<text transform="translate(670.5 249.49) scale(1.0 1)" font-size="5.8" fill="#262626" text-anchor="middle" font-weight="normal" letter-spacing="-0.25" style="font-family:'Liberation Sans',sans-serif">Position</text>
<rect x="660.1" y="250.4" width="20.60" height="42.40" fill="#6a6a6a" stroke="#444" stroke-width="0.8"/>
<rect x="660.6" y="251.4" width="3.4" height="40.40" fill="url(#rail)"/>
<rect x="676.8" y="251.4" width="3.4" height="40.40" fill="url(#rail)"/>
<rect x="664.5" y="252.0" width="11.80" height="39.20" fill="url(#wv)"/>
<text x="670.4" y="262.10" font-size="5" fill="#1a1a1a" text-anchor="middle" letter-spacing="-0.2" style="font-family:'Liberation Sans',sans-serif">110</text>
<text x="670.4" y="272.70" font-size="5" fill="#222" text-anchor="middle" letter-spacing="-0.2" style="font-family:'Liberation Sans',sans-serif">120</text>
<text x="670.4" y="283.20" font-size="5" fill="#1a1a1a" text-anchor="middle" letter-spacing="-0.2" style="font-family:'Liberation Sans',sans-serif">130</text>
<path d="M660.7 268.59999999999997L663.9 270.9L660.7 273.2Z" fill="#f01010"/>
<path d="M680.0999999999999 268.59999999999997L676.9 270.9L680.0999999999999 273.2Z" fill="#f01010"/>
<path d="M657.1999999999999 265.29999999999995l2.2 3.2h-1.5v4.8h1.5l-2.2 3.2l-2.2-3.2h1.5v-4.8h-1.5z" fill="#f4e818"/>
<text transform="translate(693.9 252.41) scale(1.0 1)" font-size="5.3" fill="#262626" text-anchor="end" font-weight="normal" letter-spacing="-0.25" style="font-family:'Liberation Sans',sans-serif">AC</text>
<text transform="translate(693.9 259.76) scale(1.0 1)" font-size="5.3" fill="#262626" text-anchor="end" font-weight="normal" letter-spacing="-0.25" style="font-family:'Liberation Sans',sans-serif">DC</text>
<text transform="translate(693.9 267.11) scale(1.0 1)" font-size="5.3" fill="#262626" text-anchor="end" font-weight="normal" letter-spacing="-0.25" style="font-family:'Liberation Sans',sans-serif">GND</text>
<text transform="translate(693.9 274.46) scale(1.0 1)" font-size="5.3" fill="#262626" text-anchor="end" font-weight="normal" letter-spacing="-0.25" style="font-family:'Liberation Sans',sans-serif">OFF</text>
<rect x="695.5" y="245.6" width="7.00" height="32.00" fill="#b4b4b4" stroke="#4a4a4a" stroke-width="0.8"/>
<rect x="698.3" y="247.6" width="1.4" height="28.00" fill="#222"/>
<rect x="696.3" y="253.4" width="5.40" height="7.20" fill="#bcbcbc" stroke="#7a7a7a" stroke-width="0.5"/>
<path d="M696.5 257.0H701.5" stroke="#909090" stroke-width="0.5"/>
<text transform="translate(693.9 284.51) scale(1.0 1)" font-size="5.3" fill="#262626" text-anchor="end" font-weight="normal" letter-spacing="-0.25" style="font-family:'Liberation Sans',sans-serif">Invert</text>
<rect x="694.9" y="279.0" width="8.20" height="7.20" fill="#707070" stroke="#3c3c3c" stroke-width="0.6"/>
<path d="M695.6999999999999 285.4V279.8H702.3000000000001" stroke="#a8a8a8" stroke-width="0.7" fill="none"/>
<path d="M695.6999999999999 285.4H702.3000000000001V279.8" stroke="#2c2c2c" stroke-width="0.9" fill="none"/>
<text transform="translate(693.9 293.51) scale(1.0 1)" font-size="5.3" fill="#262626" text-anchor="end" font-weight="normal" letter-spacing="-0.25" style="font-family:'Liberation Sans',sans-serif">A+B</text>
<rect x="694.9" y="287.5" width="8.20" height="7.10" fill="#707070" stroke="#3c3c3c" stroke-width="0.6"/>
<path d="M695.6999999999999 293.8V288.3H702.3000000000001" stroke="#a8a8a8" stroke-width="0.7" fill="none"/>
<path d="M695.6999999999999 293.8H702.3000000000001V288.3" stroke="#2c2c2c" stroke-width="0.9" fill="none"/>
<path d="M656.25 340.3V317.2A23.27 23.27 0 0 1 702.8 317.2V340.3Z" fill="#f9f9f9" stroke="#6e6e6e" stroke-width="0.5"/>
<rect x="669.5999999999999" y="329.3" width="19.4" height="11" fill="#989898"/>
<path d="M667.50 327.81L666.26 328.97" stroke="#333" stroke-width="0.5"/>
<path d="M664.37 322.89L662.79 323.53" stroke="#333" stroke-width="0.5"/>
<path d="M663.20 316.90L661.50 316.90" stroke="#333" stroke-width="0.5"/>
<path d="M664.16 311.43L662.57 310.85" stroke="#333" stroke-width="0.5"/>
<path d="M667.69 305.79L666.47 304.60" stroke="#333" stroke-width="0.5"/>
<path d="M672.69 302.28L672.00 300.73" stroke="#333" stroke-width="0.5"/>
<path d="M678.36 300.92L678.27 299.22" stroke="#333" stroke-width="0.5"/>
<path d="M684.14 301.68L684.67 300.07" stroke="#333" stroke-width="0.5"/>
<path d="M690.11 305.20L691.27 303.96" stroke="#333" stroke-width="0.5"/>
<path d="M694.24 311.43L695.83 310.85" stroke="#333" stroke-width="0.5"/>
<path d="M695.20 316.90L696.90 316.90" stroke="#333" stroke-width="0.5"/>
<path d="M694.03 322.89L695.61 323.53" stroke="#333" stroke-width="0.5"/>
<path d="M690.51 328.21L691.72 329.42" stroke="#333" stroke-width="0.5"/>
<text x="664.13" y="332.30" font-size="3.9" fill="#1c1c1c" text-anchor="middle" letter-spacing="-0.2" style="font-family:'Liberation Sans',sans-serif">20</text>
<text x="660.10" y="325.97" font-size="3.9" fill="#1c1c1c" text-anchor="middle" letter-spacing="-0.2" style="font-family:'Liberation Sans',sans-serif">10</text>
<text x="658.85" y="318.25" font-size="3.9" fill="#1c1c1c" text-anchor="middle" letter-spacing="-0.2" style="font-family:'Liberation Sans',sans-serif">5</text>
<text x="659.84" y="311.20" font-size="3.9" fill="#1c1c1c" text-anchor="middle" letter-spacing="-0.2" style="font-family:'Liberation Sans',sans-serif">2</text>
<text x="664.38" y="303.94" font-size="3.9" fill="#1c1c1c" text-anchor="middle" letter-spacing="-0.2" style="font-family:'Liberation Sans',sans-serif">1</text>
<text x="670.82" y="299.43" font-size="3.9" fill="#1c1c1c" text-anchor="middle" letter-spacing="-0.2" style="font-family:'Liberation Sans',sans-serif">0.5</text>
<text x="678.12" y="297.68" font-size="3.9" fill="#1c1c1c" text-anchor="middle" letter-spacing="-0.2" style="font-family:'Liberation Sans',sans-serif">0.2</text>
<text x="685.57" y="298.66" font-size="3.9" fill="#1c1c1c" text-anchor="middle" letter-spacing="-0.2" style="font-family:'Liberation Sans',sans-serif">0.1</text>
<text x="693.25" y="303.18" font-size="3.9" fill="#1c1c1c" text-anchor="middle" letter-spacing="-0.2" style="font-family:'Liberation Sans',sans-serif">50</text>
<text x="698.56" y="311.20" font-size="3.9" fill="#1c1c1c" text-anchor="middle" letter-spacing="-0.2" style="font-family:'Liberation Sans',sans-serif">20</text>
<text x="699.80" y="318.25" font-size="3.9" fill="#1c1c1c" text-anchor="middle" letter-spacing="-0.2" style="font-family:'Liberation Sans',sans-serif">10</text>
<text x="698.30" y="325.97" font-size="3.9" fill="#1c1c1c" text-anchor="middle" letter-spacing="-0.2" style="font-family:'Liberation Sans',sans-serif">5</text>
<text x="693.77" y="332.82" font-size="3.9" fill="#1c1c1c" text-anchor="middle" letter-spacing="-0.2" style="font-family:'Liberation Sans',sans-serif">2</text>
<path d="M688.02 303.31L691.45 298.03" stroke="#444" stroke-width="0.6"/>
<circle cx="679.4999999999999" cy="317.4" r="15.7" fill="#5a5a5a" opacity="0.5"/>
<circle cx="679.1999999999999" cy="316.9" r="15.2" fill="url(#kn)" stroke="#5c5c5c" stroke-width="0.5"/>
<circle cx="679.4" cy="316.59999999999997" r="7.9" fill="url(#cap)" stroke="#4a4a4a" stroke-width="0.8"/>
<path d="M664.90 316.90L670.31 314.18L670.31 319.62Z" fill="#f4e818"/>
<circle cx="682.90" cy="321.10" r="1.25" fill="#f4e818"/>
<rect x="669.9999999999999" y="333.6" width="18.6" height="6.5" fill="#fdfdfd" stroke="#3c3c3c" stroke-width="0.6"/>
<text x="671.4" y="338.8" font-size="5" fill="#2838c8" style="font-family:'Liberation Sans',sans-serif">5</text>
<text x="662.35" y="337.8" font-size="5.4" fill="#333" text-anchor="middle" font-style="italic" style="font-family:'Liberation Sans',sans-serif">V</text>
<text x="696.4" y="337.8" font-size="5.4" fill="#333" text-anchor="middle" font-style="italic" letter-spacing="-0.25" style="font-family:'Liberation Sans',sans-serif">mV</text>
<text transform="translate(720.2 249.49) scale(1.0 1)" font-size="5.8" fill="#262626" text-anchor="middle" font-weight="normal" letter-spacing="-0.25" style="font-family:'Liberation Sans',sans-serif">Position</text>
<rect x="709.8000000000001" y="250.4" width="20.60" height="42.40" fill="#6a6a6a" stroke="#444" stroke-width="0.8"/>
<rect x="710.3000000000001" y="251.4" width="3.4" height="40.40" fill="url(#rail)"/>
<rect x="726.5" y="251.4" width="3.4" height="40.40" fill="url(#rail)"/>
<rect x="714.2" y="252.0" width="11.80" height="39.20" fill="url(#wv)"/>
<text x="720.1" y="262.10" font-size="5" fill="#1a1a1a" text-anchor="middle" letter-spacing="-0.2" style="font-family:'Liberation Sans',sans-serif">-50</text>
<text x="720.1" y="272.70" font-size="5" fill="#222" text-anchor="middle" letter-spacing="-0.2" style="font-family:'Liberation Sans',sans-serif">-40</text>
<text x="720.1" y="283.20" font-size="5" fill="#1a1a1a" text-anchor="middle" letter-spacing="-0.2" style="font-family:'Liberation Sans',sans-serif">-30</text>
<path d="M710.4000000000001 268.59999999999997L713.6 270.9L710.4000000000001 273.2Z" fill="#f01010"/>
<path d="M729.8 268.59999999999997L726.6 270.9L729.8 273.2Z" fill="#f01010"/>
<path d="M706.9 265.29999999999995l2.2 3.2h-1.5v4.8h1.5l-2.2 3.2l-2.2-3.2h1.5v-4.8h-1.5z" fill="#e0188c"/>
<text transform="translate(743.6 252.41) scale(1.0 1)" font-size="5.3" fill="#262626" text-anchor="end" font-weight="normal" letter-spacing="-0.25" style="font-family:'Liberation Sans',sans-serif">AC</text>
<text transform="translate(743.6 259.76) scale(1.0 1)" font-size="5.3" fill="#262626" text-anchor="end" font-weight="normal" letter-spacing="-0.25" style="font-family:'Liberation Sans',sans-serif">DC</text>
<text transform="translate(743.6 267.11) scale(1.0 1)" font-size="5.3" fill="#262626" text-anchor="end" font-weight="normal" letter-spacing="-0.25" style="font-family:'Liberation Sans',sans-serif">GND</text>
<text transform="translate(743.6 274.46) scale(1.0 1)" font-size="5.3" fill="#262626" text-anchor="end" font-weight="normal" letter-spacing="-0.25" style="font-family:'Liberation Sans',sans-serif">OFF</text>
<rect x="745.2" y="245.6" width="7.00" height="32.00" fill="#b4b4b4" stroke="#4a4a4a" stroke-width="0.8"/>
<rect x="748.0" y="247.6" width="1.4" height="28.00" fill="#222"/>
<rect x="746.0" y="253.4" width="5.40" height="7.20" fill="#bcbcbc" stroke="#7a7a7a" stroke-width="0.5"/>
<path d="M746.2 257.0H751.2" stroke="#909090" stroke-width="0.5"/>
<text transform="translate(743.6 284.51) scale(1.0 1)" font-size="5.3" fill="#262626" text-anchor="end" font-weight="normal" letter-spacing="-0.25" style="font-family:'Liberation Sans',sans-serif">Invert</text>
<rect x="744.6" y="279.0" width="8.20" height="7.20" fill="#707070" stroke="#3c3c3c" stroke-width="0.6"/>
<path d="M745.4 285.4V279.8H752.0000000000001" stroke="#a8a8a8" stroke-width="0.7" fill="none"/>
<path d="M745.4 285.4H752.0000000000001V279.8" stroke="#2c2c2c" stroke-width="0.9" fill="none"/>
<text transform="translate(743.6 293.51) scale(1.0 1)" font-size="5.3" fill="#262626" text-anchor="end" font-weight="normal" letter-spacing="-0.25" style="font-family:'Liberation Sans',sans-serif">C+D</text>
<rect x="744.6" y="287.5" width="8.20" height="7.10" fill="#707070" stroke="#3c3c3c" stroke-width="0.6"/>
<path d="M745.4 293.8V288.3H752.0000000000001" stroke="#a8a8a8" stroke-width="0.7" fill="none"/>
<path d="M745.4 293.8H752.0000000000001V288.3" stroke="#2c2c2c" stroke-width="0.9" fill="none"/>
<path d="M705.95 340.3V317.2A23.27 23.27 0 0 1 752.5 317.2V340.3Z" fill="#f9f9f9" stroke="#6e6e6e" stroke-width="0.5"/>
<rect x="719.3" y="329.3" width="19.4" height="11" fill="#989898"/>
<path d="M717.20 327.81L715.96 328.97" stroke="#333" stroke-width="0.5"/>
<path d="M714.07 322.89L712.49 323.53" stroke="#333" stroke-width="0.5"/>
<path d="M712.90 316.90L711.20 316.90" stroke="#333" stroke-width="0.5"/>
<path d="M713.86 311.43L712.27 310.85" stroke="#333" stroke-width="0.5"/>
<path d="M717.39 305.79L716.17 304.60" stroke="#333" stroke-width="0.5"/>
<path d="M722.39 302.28L721.70 300.73" stroke="#333" stroke-width="0.5"/>
<path d="M728.06 300.92L727.97 299.22" stroke="#333" stroke-width="0.5"/>
<path d="M733.84 301.68L734.37 300.07" stroke="#333" stroke-width="0.5"/>
<path d="M739.81 305.20L740.97 303.96" stroke="#333" stroke-width="0.5"/>
<path d="M743.94 311.43L745.53 310.85" stroke="#333" stroke-width="0.5"/>
<path d="M744.90 316.90L746.60 316.90" stroke="#333" stroke-width="0.5"/>
<path d="M743.73 322.89L745.31 323.53" stroke="#333" stroke-width="0.5"/>
<path d="M740.21 328.21L741.42 329.42" stroke="#333" stroke-width="0.5"/>
<text x="713.83" y="332.30" font-size="3.9" fill="#1c1c1c" text-anchor="middle" letter-spacing="-0.2" style="font-family:'Liberation Sans',sans-serif">20</text>
<text x="709.80" y="325.97" font-size="3.9" fill="#1c1c1c" text-anchor="middle" letter-spacing="-0.2" style="font-family:'Liberation Sans',sans-serif">10</text>
<text x="708.55" y="318.25" font-size="3.9" fill="#1c1c1c" text-anchor="middle" letter-spacing="-0.2" style="font-family:'Liberation Sans',sans-serif">5</text>
<text x="709.54" y="311.20" font-size="3.9" fill="#1c1c1c" text-anchor="middle" letter-spacing="-0.2" style="font-family:'Liberation Sans',sans-serif">2</text>
<text x="714.08" y="303.94" font-size="3.9" fill="#1c1c1c" text-anchor="middle" letter-spacing="-0.2" style="font-family:'Liberation Sans',sans-serif">1</text>
<text x="720.52" y="299.43" font-size="3.9" fill="#1c1c1c" text-anchor="middle" letter-spacing="-0.2" style="font-family:'Liberation Sans',sans-serif">0.5</text>
<text x="727.82" y="297.68" font-size="3.9" fill="#1c1c1c" text-anchor="middle" letter-spacing="-0.2" style="font-family:'Liberation Sans',sans-serif">0.2</text>
<text x="735.27" y="298.66" font-size="3.9" fill="#1c1c1c" text-anchor="middle" letter-spacing="-0.2" style="font-family:'Liberation Sans',sans-serif">0.1</text>
<text x="742.95" y="303.18" font-size="3.9" fill="#1c1c1c" text-anchor="middle" letter-spacing="-0.2" style="font-family:'Liberation Sans',sans-serif">50</text>
<text x="748.26" y="311.20" font-size="3.9" fill="#1c1c1c" text-anchor="middle" letter-spacing="-0.2" style="font-family:'Liberation Sans',sans-serif">20</text>
<text x="749.50" y="318.25" font-size="3.9" fill="#1c1c1c" text-anchor="middle" letter-spacing="-0.2" style="font-family:'Liberation Sans',sans-serif">10</text>
<text x="748.00" y="325.97" font-size="3.9" fill="#1c1c1c" text-anchor="middle" letter-spacing="-0.2" style="font-family:'Liberation Sans',sans-serif">5</text>
<text x="743.47" y="332.82" font-size="3.9" fill="#1c1c1c" text-anchor="middle" letter-spacing="-0.2" style="font-family:'Liberation Sans',sans-serif">2</text>
<path d="M737.72 303.31L741.15 298.03" stroke="#444" stroke-width="0.6"/>
<circle cx="729.1999999999999" cy="317.4" r="15.7" fill="#5a5a5a" opacity="0.5"/>
<circle cx="728.9" cy="316.9" r="15.2" fill="url(#kn)" stroke="#5c5c5c" stroke-width="0.5"/>
<circle cx="729.1" cy="316.59999999999997" r="7.9" fill="url(#cap)" stroke="#4a4a4a" stroke-width="0.8"/>
<path d="M714.60 316.90L720.01 314.18L720.01 319.62Z" fill="#e0188c"/>
<circle cx="732.60" cy="321.10" r="1.25" fill="#e0188c"/>
<rect x="719.6999999999999" y="333.6" width="18.6" height="6.5" fill="#fdfdfd" stroke="#3c3c3c" stroke-width="0.6"/>
<text x="721.1" y="338.8" font-size="5" fill="#2838c8" style="font-family:'Liberation Sans',sans-serif">5</text>
<text x="712.0500000000001" y="337.8" font-size="5.4" fill="#333" text-anchor="middle" font-style="italic" style="font-family:'Liberation Sans',sans-serif">V</text>
<text x="746.1" y="337.8" font-size="5.4" fill="#333" text-anchor="middle" font-style="italic" letter-spacing="-0.25" style="font-family:'Liberation Sans',sans-serif">mV</text>
<text transform="translate(670.5 362.29) scale(1.0 1)" font-size="5.8" fill="#262626" text-anchor="middle" font-weight="normal" letter-spacing="-0.25" style="font-family:'Liberation Sans',sans-serif">Position</text>
<rect x="660.1" y="363.2" width="20.60" height="42.40" fill="#6a6a6a" stroke="#444" stroke-width="0.8"/>
<rect x="660.6" y="364.2" width="3.4" height="40.40" fill="url(#rail)"/>
<rect x="676.8" y="364.2" width="3.4" height="40.40" fill="url(#rail)"/>
<rect x="664.5" y="364.8" width="11.80" height="39.20" fill="url(#wv)"/>
<text x="670.4" y="374.90" font-size="5" fill="#1a1a1a" text-anchor="middle" letter-spacing="-0.2" style="font-family:'Liberation Sans',sans-serif">30</text>
<text x="670.4" y="385.50" font-size="5" fill="#222" text-anchor="middle" letter-spacing="-0.2" style="font-family:'Liberation Sans',sans-serif">40</text>
<text x="670.4" y="396.00" font-size="5" fill="#1a1a1a" text-anchor="middle" letter-spacing="-0.2" style="font-family:'Liberation Sans',sans-serif">50</text>
<path d="M660.7 381.4L663.9 383.7L660.7 386.0Z" fill="#f01010"/>
<path d="M680.0999999999999 381.4L676.9 383.7L680.0999999999999 386.0Z" fill="#f01010"/>
<path d="M657.1999999999999 378.09999999999997l2.2 3.2h-1.5v4.8h1.5l-2.2 3.2l-2.2-3.2h1.5v-4.8h-1.5z" fill="#2088e0"/>
<text transform="translate(693.9 365.21) scale(1.0 1)" font-size="5.3" fill="#262626" text-anchor="end" font-weight="normal" letter-spacing="-0.25" style="font-family:'Liberation Sans',sans-serif">AC</text>
<text transform="translate(693.9 372.56) scale(1.0 1)" font-size="5.3" fill="#262626" text-anchor="end" font-weight="normal" letter-spacing="-0.25" style="font-family:'Liberation Sans',sans-serif">DC</text>
<text transform="translate(693.9 379.91) scale(1.0 1)" font-size="5.3" fill="#262626" text-anchor="end" font-weight="normal" letter-spacing="-0.25" style="font-family:'Liberation Sans',sans-serif">GND</text>
<text transform="translate(693.9 387.26) scale(1.0 1)" font-size="5.3" fill="#262626" text-anchor="end" font-weight="normal" letter-spacing="-0.25" style="font-family:'Liberation Sans',sans-serif">OFF</text>
<rect x="695.5" y="358.4" width="7.00" height="32.00" fill="#b4b4b4" stroke="#4a4a4a" stroke-width="0.8"/>
<rect x="698.3" y="360.4" width="1.4" height="28.00" fill="#222"/>
<rect x="696.3" y="366.2" width="5.40" height="7.20" fill="#bcbcbc" stroke="#7a7a7a" stroke-width="0.5"/>
<path d="M696.5 369.8H701.5" stroke="#909090" stroke-width="0.5"/>
<text transform="translate(693.9 397.31) scale(1.0 1)" font-size="5.3" fill="#262626" text-anchor="end" font-weight="normal" letter-spacing="-0.25" style="font-family:'Liberation Sans',sans-serif">Invert</text>
<rect x="694.9" y="391.8" width="8.20" height="7.20" fill="#707070" stroke="#3c3c3c" stroke-width="0.6"/>
<path d="M695.6999999999999 398.2V392.6H702.3000000000001" stroke="#a8a8a8" stroke-width="0.7" fill="none"/>
<path d="M695.6999999999999 398.2H702.3000000000001V392.6" stroke="#2c2c2c" stroke-width="0.9" fill="none"/>
<path d="M656.25 452.4V429.5A23.27 23.27 0 0 1 702.8 429.5V452.4Z" fill="#f9f9f9" stroke="#6e6e6e" stroke-width="0.5"/>
<rect x="669.5999999999999" y="441.4" width="19.4" height="11" fill="#989898"/>
<path d="M667.50 440.11L666.26 441.27" stroke="#333" stroke-width="0.5"/>
<path d="M664.37 435.19L662.79 435.83" stroke="#333" stroke-width="0.5"/>
<path d="M663.20 429.20L661.50 429.20" stroke="#333" stroke-width="0.5"/>
<path d="M664.16 423.73L662.57 423.15" stroke="#333" stroke-width="0.5"/>
<path d="M667.69 418.09L666.47 416.90" stroke="#333" stroke-width="0.5"/>
<path d="M672.69 414.58L672.00 413.03" stroke="#333" stroke-width="0.5"/>
<path d="M678.36 413.22L678.27 411.52" stroke="#333" stroke-width="0.5"/>
<path d="M684.14 413.98L684.67 412.37" stroke="#333" stroke-width="0.5"/>
<path d="M690.11 417.50L691.27 416.26" stroke="#333" stroke-width="0.5"/>
<path d="M694.24 423.73L695.83 423.15" stroke="#333" stroke-width="0.5"/>
<path d="M695.20 429.20L696.90 429.20" stroke="#333" stroke-width="0.5"/>
<path d="M694.03 435.19L695.61 435.83" stroke="#333" stroke-width="0.5"/>
<path d="M690.51 440.51L691.72 441.72" stroke="#333" stroke-width="0.5"/>
<text x="664.13" y="444.60" font-size="3.9" fill="#1c1c1c" text-anchor="middle" letter-spacing="-0.2" style="font-family:'Liberation Sans',sans-serif">20</text>
<text x="660.10" y="438.27" font-size="3.9" fill="#1c1c1c" text-anchor="middle" letter-spacing="-0.2" style="font-family:'Liberation Sans',sans-serif">10</text>
<text x="658.85" y="430.55" font-size="3.9" fill="#1c1c1c" text-anchor="middle" letter-spacing="-0.2" style="font-family:'Liberation Sans',sans-serif">5</text>
<text x="659.84" y="423.50" font-size="3.9" fill="#1c1c1c" text-anchor="middle" letter-spacing="-0.2" style="font-family:'Liberation Sans',sans-serif">2</text>
<text x="664.38" y="416.24" font-size="3.9" fill="#1c1c1c" text-anchor="middle" letter-spacing="-0.2" style="font-family:'Liberation Sans',sans-serif">1</text>
<text x="670.82" y="411.73" font-size="3.9" fill="#1c1c1c" text-anchor="middle" letter-spacing="-0.2" style="font-family:'Liberation Sans',sans-serif">0.5</text>
<text x="678.12" y="409.98" font-size="3.9" fill="#1c1c1c" text-anchor="middle" letter-spacing="-0.2" style="font-family:'Liberation Sans',sans-serif">0.2</text>
<text x="685.57" y="410.96" font-size="3.9" fill="#1c1c1c" text-anchor="middle" letter-spacing="-0.2" style="font-family:'Liberation Sans',sans-serif">0.1</text>
<text x="693.25" y="415.48" font-size="3.9" fill="#1c1c1c" text-anchor="middle" letter-spacing="-0.2" style="font-family:'Liberation Sans',sans-serif">50</text>
<text x="698.56" y="423.50" font-size="3.9" fill="#1c1c1c" text-anchor="middle" letter-spacing="-0.2" style="font-family:'Liberation Sans',sans-serif">20</text>
<text x="699.80" y="430.55" font-size="3.9" fill="#1c1c1c" text-anchor="middle" letter-spacing="-0.2" style="font-family:'Liberation Sans',sans-serif">10</text>
<text x="698.30" y="438.27" font-size="3.9" fill="#1c1c1c" text-anchor="middle" letter-spacing="-0.2" style="font-family:'Liberation Sans',sans-serif">5</text>
<text x="693.77" y="445.12" font-size="3.9" fill="#1c1c1c" text-anchor="middle" letter-spacing="-0.2" style="font-family:'Liberation Sans',sans-serif">2</text>
<path d="M688.02 415.61L691.45 410.33" stroke="#444" stroke-width="0.6"/>
<circle cx="679.4999999999999" cy="429.7" r="15.7" fill="#5a5a5a" opacity="0.5"/>
<circle cx="679.1999999999999" cy="429.2" r="15.2" fill="url(#kn)" stroke="#5c5c5c" stroke-width="0.5"/>
<circle cx="679.4" cy="428.9" r="7.9" fill="url(#cap)" stroke="#4a4a4a" stroke-width="0.8"/>
<path d="M664.90 429.20L670.31 426.48L670.31 431.92Z" fill="#2088e0"/>
<circle cx="682.90" cy="433.40" r="1.25" fill="#2088e0"/>
<rect x="669.9999999999999" y="445.7" width="18.6" height="6.5" fill="#fdfdfd" stroke="#3c3c3c" stroke-width="0.6"/>
<text x="671.4" y="450.9" font-size="5" fill="#2838c8" style="font-family:'Liberation Sans',sans-serif">5</text>
<text x="662.35" y="449.9" font-size="5.4" fill="#333" text-anchor="middle" font-style="italic" style="font-family:'Liberation Sans',sans-serif">V</text>
<text x="696.4" y="449.9" font-size="5.4" fill="#333" text-anchor="middle" font-style="italic" letter-spacing="-0.25" style="font-family:'Liberation Sans',sans-serif">mV</text>
<text transform="translate(720.2 362.29) scale(1.0 1)" font-size="5.8" fill="#262626" text-anchor="middle" font-weight="normal" letter-spacing="-0.25" style="font-family:'Liberation Sans',sans-serif">Position</text>
<rect x="709.8000000000001" y="363.2" width="20.60" height="42.40" fill="#6a6a6a" stroke="#444" stroke-width="0.8"/>
<rect x="710.3000000000001" y="364.2" width="3.4" height="40.40" fill="url(#rail)"/>
<rect x="726.5" y="364.2" width="3.4" height="40.40" fill="url(#rail)"/>
<rect x="714.2" y="364.8" width="11.80" height="39.20" fill="url(#wv)"/>
<text x="720.1" y="374.90" font-size="5" fill="#1a1a1a" text-anchor="middle" letter-spacing="-0.2" style="font-family:'Liberation Sans',sans-serif">-130</text>
<text x="720.1" y="385.50" font-size="5" fill="#222" text-anchor="middle" letter-spacing="-0.2" style="font-family:'Liberation Sans',sans-serif">-120</text>
<text x="720.1" y="396.00" font-size="5" fill="#1a1a1a" text-anchor="middle" letter-spacing="-0.2" style="font-family:'Liberation Sans',sans-serif">-110</text>
<path d="M710.4000000000001 381.4L713.6 383.7L710.4000000000001 386.0Z" fill="#f01010"/>
<path d="M729.8 381.4L726.6 383.7L729.8 386.0Z" fill="#f01010"/>
<path d="M706.9 378.09999999999997l2.2 3.2h-1.5v4.8h1.5l-2.2 3.2l-2.2-3.2h1.5v-4.8h-1.5z" fill="#189838"/>
<text transform="translate(743.6 365.21) scale(1.0 1)" font-size="5.3" fill="#262626" text-anchor="end" font-weight="normal" letter-spacing="-0.25" style="font-family:'Liberation Sans',sans-serif">AC</text>
<text transform="translate(743.6 372.56) scale(1.0 1)" font-size="5.3" fill="#262626" text-anchor="end" font-weight="normal" letter-spacing="-0.25" style="font-family:'Liberation Sans',sans-serif">DC</text>
<text transform="translate(743.6 379.91) scale(1.0 1)" font-size="5.3" fill="#262626" text-anchor="end" font-weight="normal" letter-spacing="-0.25" style="font-family:'Liberation Sans',sans-serif">GND</text>
<text transform="translate(743.6 387.26) scale(1.0 1)" font-size="5.3" fill="#262626" text-anchor="end" font-weight="normal" letter-spacing="-0.25" style="font-family:'Liberation Sans',sans-serif">OFF</text>
<rect x="745.2" y="358.4" width="7.00" height="32.00" fill="#b4b4b4" stroke="#4a4a4a" stroke-width="0.8"/>
<rect x="748.0" y="360.4" width="1.4" height="28.00" fill="#222"/>
<rect x="746.0" y="366.2" width="5.40" height="7.20" fill="#bcbcbc" stroke="#7a7a7a" stroke-width="0.5"/>
<path d="M746.2 369.8H751.2" stroke="#909090" stroke-width="0.5"/>
<text transform="translate(743.6 397.31) scale(1.0 1)" font-size="5.3" fill="#262626" text-anchor="end" font-weight="normal" letter-spacing="-0.25" style="font-family:'Liberation Sans',sans-serif">Invert</text>
<rect x="744.6" y="391.8" width="8.20" height="7.20" fill="#707070" stroke="#3c3c3c" stroke-width="0.6"/>
<path d="M745.4 398.2V392.6H752.0000000000001" stroke="#a8a8a8" stroke-width="0.7" fill="none"/>
<path d="M745.4 398.2H752.0000000000001V392.6" stroke="#2c2c2c" stroke-width="0.9" fill="none"/>
<path d="M705.95 452.4V429.5A23.27 23.27 0 0 1 752.5 429.5V452.4Z" fill="#f9f9f9" stroke="#6e6e6e" stroke-width="0.5"/>
<rect x="719.3" y="441.4" width="19.4" height="11" fill="#989898"/>
<path d="M717.20 440.11L715.96 441.27" stroke="#333" stroke-width="0.5"/>
<path d="M714.07 435.19L712.49 435.83" stroke="#333" stroke-width="0.5"/>
<path d="M712.90 429.20L711.20 429.20" stroke="#333" stroke-width="0.5"/>
<path d="M713.86 423.73L712.27 423.15" stroke="#333" stroke-width="0.5"/>
<path d="M717.39 418.09L716.17 416.90" stroke="#333" stroke-width="0.5"/>
<path d="M722.39 414.58L721.70 413.03" stroke="#333" stroke-width="0.5"/>
<path d="M728.06 413.22L727.97 411.52" stroke="#333" stroke-width="0.5"/>
<path d="M733.84 413.98L734.37 412.37" stroke="#333" stroke-width="0.5"/>
<path d="M739.81 417.50L740.97 416.26" stroke="#333" stroke-width="0.5"/>
<path d="M743.94 423.73L745.53 423.15" stroke="#333" stroke-width="0.5"/>
<path d="M744.90 429.20L746.60 429.20" stroke="#333" stroke-width="0.5"/>
<path d="M743.73 435.19L745.31 435.83" stroke="#333" stroke-width="0.5"/>
<path d="M740.21 440.51L741.42 441.72" stroke="#333" stroke-width="0.5"/>
<text x="713.83" y="444.60" font-size="3.9" fill="#1c1c1c" text-anchor="middle" letter-spacing="-0.2" style="font-family:'Liberation Sans',sans-serif">20</text>
<text x="709.80" y="438.27" font-size="3.9" fill="#1c1c1c" text-anchor="middle" letter-spacing="-0.2" style="font-family:'Liberation Sans',sans-serif">10</text>
<text x="708.55" y="430.55" font-size="3.9" fill="#1c1c1c" text-anchor="middle" letter-spacing="-0.2" style="font-family:'Liberation Sans',sans-serif">5</text>
<text x="709.54" y="423.50" font-size="3.9" fill="#1c1c1c" text-anchor="middle" letter-spacing="-0.2" style="font-family:'Liberation Sans',sans-serif">2</text>
<text x="714.08" y="416.24" font-size="3.9" fill="#1c1c1c" text-anchor="middle" letter-spacing="-0.2" style="font-family:'Liberation Sans',sans-serif">1</text>
<text x="720.52" y="411.73" font-size="3.9" fill="#1c1c1c" text-anchor="middle" letter-spacing="-0.2" style="font-family:'Liberation Sans',sans-serif">0.5</text>
<text x="727.82" y="409.98" font-size="3.9" fill="#1c1c1c" text-anchor="middle" letter-spacing="-0.2" style="font-family:'Liberation Sans',sans-serif">0.2</text>
<text x="735.27" y="410.96" font-size="3.9" fill="#1c1c1c" text-anchor="middle" letter-spacing="-0.2" style="font-family:'Liberation Sans',sans-serif">0.1</text>
<text x="742.95" y="415.48" font-size="3.9" fill="#1c1c1c" text-anchor="middle" letter-spacing="-0.2" style="font-family:'Liberation Sans',sans-serif">50</text>
<text x="748.26" y="423.50" font-size="3.9" fill="#1c1c1c" text-anchor="middle" letter-spacing="-0.2" style="font-family:'Liberation Sans',sans-serif">20</text>
<text x="749.50" y="430.55" font-size="3.9" fill="#1c1c1c" text-anchor="middle" letter-spacing="-0.2" style="font-family:'Liberation Sans',sans-serif">10</text>
<text x="748.00" y="438.27" font-size="3.9" fill="#1c1c1c" text-anchor="middle" letter-spacing="-0.2" style="font-family:'Liberation Sans',sans-serif">5</text>
<text x="743.47" y="445.12" font-size="3.9" fill="#1c1c1c" text-anchor="middle" letter-spacing="-0.2" style="font-family:'Liberation Sans',sans-serif">2</text>
<path d="M737.72 415.61L741.15 410.33" stroke="#444" stroke-width="0.6"/>
<circle cx="729.1999999999999" cy="429.7" r="15.7" fill="#5a5a5a" opacity="0.5"/>
<circle cx="728.9" cy="429.2" r="15.2" fill="url(#kn)" stroke="#5c5c5c" stroke-width="0.5"/>
<circle cx="729.1" cy="428.9" r="7.9" fill="url(#cap)" stroke="#4a4a4a" stroke-width="0.8"/>
<path d="M714.60 429.20L720.01 426.48L720.01 431.92Z" fill="#189838"/>
<circle cx="732.60" cy="433.40" r="1.25" fill="#189838"/>
<rect x="719.6999999999999" y="445.7" width="18.6" height="6.5" fill="#fdfdfd" stroke="#3c3c3c" stroke-width="0.6"/>
<text x="721.1" y="450.9" font-size="5" fill="#2838c8" style="font-family:'Liberation Sans',sans-serif">5</text>
<text x="712.0500000000001" y="449.9" font-size="5.4" fill="#333" text-anchor="middle" font-style="italic" style="font-family:'Liberation Sans',sans-serif">V</text>
<text x="746.1" y="449.9" font-size="5.4" fill="#333" text-anchor="middle" font-style="italic" letter-spacing="-0.25" style="font-family:'Liberation Sans',sans-serif">mV</text>
<text transform="translate(620.6 249.49) scale(1.0 1)" font-size="5.8" fill="#262626" text-anchor="middle" font-weight="normal" letter-spacing="-0.25" style="font-family:'Liberation Sans',sans-serif">Level</text>
<rect x="609.9" y="250.4" width="21.70" height="42.80" fill="#6a6a6a" stroke="#444" stroke-width="0.8"/>
<rect x="610.4" y="251.4" width="3.4" height="40.80" fill="url(#rail)"/>
<rect x="627.7" y="251.4" width="3.4" height="40.80" fill="url(#rail)"/>
<rect x="614.3" y="252.0" width="12.90" height="39.60" fill="url(#wv)"/>
<text x="620.75" y="263.80" font-size="5" fill="#1a1a1a" text-anchor="middle" letter-spacing="-0.2" style="font-family:'Liberation Sans',sans-serif">0</text>
<text x="620.75" y="273.50" font-size="5" fill="#222" text-anchor="middle" letter-spacing="-0.2" style="font-family:'Liberation Sans',sans-serif">10</text>
<text x="620.75" y="284.80" font-size="5" fill="#1a1a1a" text-anchor="middle" letter-spacing="-0.2" style="font-family:'Liberation Sans',sans-serif">20</text>
<path d="M610.5 269.09999999999997L613.6999999999999 271.4L610.5 273.7Z" fill="#f01010"/>
<path d="M631.0 269.09999999999997L627.8000000000001 271.4L631.0 273.7Z" fill="#f01010"/>
<path d="M607.0 265.79999999999995l2.2 3.2h-1.5v4.8h1.5l-2.2 3.2l-2.2-3.2h1.5v-4.8h-1.5z" fill="#e8a8a0"/>
<text transform="translate(644.0 252.51) scale(1.0 1)" font-size="5.3" fill="#262626" text-anchor="end" font-weight="normal" letter-spacing="-0.25" style="font-family:'Liberation Sans',sans-serif">AC</text>
<text transform="translate(644.0 259.91) scale(1.0 1)" font-size="5.3" fill="#262626" text-anchor="end" font-weight="normal" letter-spacing="-0.25" style="font-family:'Liberation Sans',sans-serif">DC</text>
<rect x="645.3" y="245.2" width="7.50" height="17.30" fill="#b4b4b4" stroke="#4a4a4a" stroke-width="0.8"/>
<rect x="648.3499999999999" y="247.2" width="1.4" height="13.30" fill="#222"/>
<rect x="646.0999999999999" y="254.0" width="5.90" height="7.60" fill="#bcbcbc" stroke="#7a7a7a" stroke-width="0.5"/>
<path d="M646.3 257.8H651.8" stroke="#909090" stroke-width="0.5"/>
<path d="M639.8 275.6h1.400v-4.400h1.600" stroke="#333" stroke-width="0.7" fill="none"/><path d="M639.800 278.600h1.400v4.400h1.600" stroke="#333" stroke-width="0.7" fill="none"/>
<rect x="645.2" y="269.0" width="7.20" height="17.40" fill="#b4b4b4" stroke="#4a4a4a" stroke-width="0.8"/>
<rect x="648.0999999999999" y="271.0" width="1.4" height="13.40" fill="#222"/>
<rect x="646.0" y="269.8" width="5.60" height="7.20" fill="#bcbcbc" stroke="#7a7a7a" stroke-width="0.5"/>
<path d="M646.2 273.4H651.4" stroke="#909090" stroke-width="0.5"/>
<text transform="translate(643.8 299.32) scale(0.92 1)" font-size="5.9" fill="#262626" text-anchor="end" font-weight="normal" letter-spacing="-0.25" style="font-family:'Liberation Sans',sans-serif">Auto</text>
<rect x="645.2" y="293.4" width="7.20" height="6.80" fill="#f6d4d4" stroke="#8a6a6a" stroke-width="0.6"/>
<path d="M646.0 299.4V294.2H651.6" stroke="#fff" stroke-width="0.7" fill="none"/>
<text transform="translate(643.8 307.12) scale(0.92 1)" font-size="5.9" fill="#262626" text-anchor="end" font-weight="normal" letter-spacing="-0.25" style="font-family:'Liberation Sans',sans-serif">One-Shot</text>
<rect x="645.2" y="301.7" width="7.20" height="6.80" fill="#707070" stroke="#3c3c3c" stroke-width="0.6"/>
<path d="M646.0 307.7V302.5H651.6" stroke="#a8a8a8" stroke-width="0.7" fill="none"/>
<path d="M646.0 307.7H651.6V302.5" stroke="#2c2c2c" stroke-width="0.9" fill="none"/>
<text transform="translate(643.8 315.82) scale(0.92 1)" font-size="5.9" fill="#262626" text-anchor="end" font-weight="normal" letter-spacing="-0.25" style="font-family:'Liberation Sans',sans-serif">Cursors</text>
<rect x="645.2" y="310.0" width="7.20" height="6.80" fill="#f6d4d4" stroke="#8a6a6a" stroke-width="0.6"/>
<path d="M646.0 316.0V310.8H651.6" stroke="#fff" stroke-width="0.7" fill="none"/>
<text transform="translate(629.0 326.09) scale(1.0 1)" font-size="5.8" fill="#262626" text-anchor="middle" font-weight="normal" letter-spacing="-0.25" style="font-family:'Liberation Sans',sans-serif">Source</text>
<text transform="translate(618.0 331.87) scale(1.0 1)" font-size="5.2" fill="#f4e818" text-anchor="middle" font-weight="bold" letter-spacing="-0.25" style="font-family:'Liberation Sans',sans-serif">A</text>
<text transform="translate(625.7 331.87) scale(1.0 1)" font-size="5.2" fill="#2088e0" text-anchor="middle" font-weight="bold" letter-spacing="-0.25" style="font-family:'Liberation Sans',sans-serif">B</text>
<text transform="translate(633.5 331.87) scale(1.0 1)" font-size="5.2" fill="#e0188c" text-anchor="middle" font-weight="bold" letter-spacing="-0.25" style="font-family:'Liberation Sans',sans-serif">C</text>
<text transform="translate(641.2 331.87) scale(1.0 1)" font-size="5.2" fill="#189838" text-anchor="middle" font-weight="bold" letter-spacing="-0.25" style="font-family:'Liberation Sans',sans-serif">D</text>
<rect x="612.2" y="332.8" width="33.60" height="6.80" fill="#b4b4b4" stroke="#4a4a4a" stroke-width="0.8"/>
<rect x="613.8000000000001" y="335.30000000000007" width="30.40" height="1.8" fill="#1e1e1e"/>
<rect x="637.8" y="333.6" width="7.20" height="5.20" fill="#bcbcbc" stroke="#7a7a7a" stroke-width="0.5"/>
<path d="M641.4 333.8V338.6" stroke="#909090" stroke-width="0.5"/>
<text transform="translate(628.2 363.69) scale(1.0 1)" font-size="5.8" fill="#262626" text-anchor="middle" font-weight="normal" letter-spacing="-0.25" style="font-family:'Liberation Sans',sans-serif">Source</text>
<path d="M611.200 368.400l5.600-3.800v3.800" stroke="#e08838" stroke-width="0.9" fill="none"/>
<text transform="translate(621.5 368.07) scale(1.0 1)" font-size="5.2" fill="#f4e818" text-anchor="middle" font-weight="bold" letter-spacing="-0.25" style="font-family:'Liberation Sans',sans-serif">A</text>
<text transform="translate(628.9 368.07) scale(1.0 1)" font-size="5.2" fill="#2088e0" text-anchor="middle" font-weight="bold" letter-spacing="-0.25" style="font-family:'Liberation Sans',sans-serif">B</text>
<text transform="translate(636.5 368.07) scale(1.0 1)" font-size="5.2" fill="#e0188c" text-anchor="middle" font-weight="bold" letter-spacing="-0.25" style="font-family:'Liberation Sans',sans-serif">C</text>
<text transform="translate(644.3 368.07) scale(1.0 1)" font-size="5.2" fill="#189838" text-anchor="middle" font-weight="bold" letter-spacing="-0.25" style="font-family:'Liberation Sans',sans-serif">D</text>
<rect x="608.2" y="370.4" width="42.20" height="6.90" fill="#b4b4b4" stroke="#4a4a4a" stroke-width="0.8"/>
<rect x="609.8000000000001" y="372.95000000000005" width="39.00" height="1.8" fill="#1e1e1e"/>
<rect x="609.0" y="371.2" width="8.00" height="5.30" fill="#bcbcbc" stroke="#7a7a7a" stroke-width="0.5"/>
<path d="M613.0 371.4V376.3" stroke="#909090" stroke-width="0.5"/>
<text transform="translate(628.2 383.19) scale(1.0 1)" font-size="5.8" fill="#262626" text-anchor="middle" font-weight="normal" letter-spacing="-0.25" style="font-family:'Liberation Sans',sans-serif">Position</text>
<rect x="608.8" y="385.0" width="41.60" height="20.80" fill="#6a6a6a" stroke="#444" stroke-width="0.8"/>
<rect x="609.8" y="385.5" width="39.60" height="3.2" fill="url(#railh)"/>
<rect x="609.8" y="402.1" width="39.60" height="3.2" fill="url(#railh)"/>
<rect x="610.4" y="389.4" width="38.40" height="12.00" fill="url(#wh)"/>
<text x="611.4" y="397.300" font-size="5" fill="#1a1a1a" text-anchor="middle" letter-spacing="-0.2" style="font-family:'Liberation Sans',sans-serif">0</text>
<text x="620.0" y="397.300" font-size="5" fill="#1a1a1a" text-anchor="middle" letter-spacing="-0.2" style="font-family:'Liberation Sans',sans-serif">410</text>
<text x="629.6" y="397.300" font-size="5" fill="#1a1a1a" text-anchor="middle" letter-spacing="-0.2" style="font-family:'Liberation Sans',sans-serif">400</text>
<text x="640.0" y="397.300" font-size="5" fill="#1a1a1a" text-anchor="middle" letter-spacing="-0.2" style="font-family:'Liberation Sans',sans-serif">390</text>
<path d="M626.700 385.400h4.600l-2.300 3.200z" fill="#f01010"/><path d="M626.700 405.400h4.600l-2.300-3.200z" fill="#f01010"/>
<path d="M606.25 452.3V429.2A23.27 23.27 0 0 1 652.8 429.2V452.3Z" fill="#f9f9f9" stroke="#6e6e6e" stroke-width="0.5"/>
<rect x="619.8" y="441.3" width="19.4" height="11" fill="#989898"/>
<path d="M618.29 440.41L617.10 441.63" stroke="#333" stroke-width="0.5"/>
<path d="M615.54 436.90L614.07 437.75" stroke="#333" stroke-width="0.5"/>
<path d="M613.81 432.50L612.15 432.88" stroke="#333" stroke-width="0.5"/>
<path d="M613.44 427.78L611.74 427.67" stroke="#333" stroke-width="0.5"/>
<path d="M614.46 423.17L612.88 422.56" stroke="#333" stroke-width="0.5"/>
<path d="M616.79 419.05L615.45 418.00" stroke="#333" stroke-width="0.5"/>
<path d="M620.22 415.79L619.25 414.40" stroke="#333" stroke-width="0.5"/>
<path d="M624.46 413.68L623.93 412.07" stroke="#333" stroke-width="0.5"/>
<path d="M628.84 412.91L628.78 411.21" stroke="#333" stroke-width="0.5"/>
<path d="M633.27 413.38L633.68 411.73" stroke="#333" stroke-width="0.5"/>
<path d="M637.40 415.04L638.25 413.57" stroke="#333" stroke-width="0.5"/>
<path d="M640.91 417.79L642.13 416.60" stroke="#333" stroke-width="0.5"/>
<path d="M643.53 421.39L645.03 420.59" stroke="#333" stroke-width="0.5"/>
<path d="M645.05 425.57L646.71 425.22" stroke="#333" stroke-width="0.5"/>
<path d="M645.36 430.02L647.06 430.13" stroke="#333" stroke-width="0.5"/>
<path d="M644.44 434.37L646.03 434.95" stroke="#333" stroke-width="0.5"/>
<path d="M642.34 438.30L643.72 439.30" stroke="#333" stroke-width="0.5"/>
<path d="M639.68 441.16L640.78 442.46" stroke="#333" stroke-width="0.5"/>
<text x="615.09" y="445.07" font-size="3.9" fill="#1c1c1c" text-anchor="middle" letter-spacing="-0.2" style="font-family:'Liberation Sans',sans-serif">200</text>
<text x="611.56" y="440.55" font-size="3.9" fill="#1c1c1c" text-anchor="middle" letter-spacing="-0.2" style="font-family:'Liberation Sans',sans-serif">100</text>
<text x="609.33" y="434.88" font-size="3.9" fill="#1c1c1c" text-anchor="middle" letter-spacing="-0.2" style="font-family:'Liberation Sans',sans-serif">50</text>
<text x="608.85" y="428.81" font-size="3.9" fill="#1c1c1c" text-anchor="middle" letter-spacing="-0.2" style="font-family:'Liberation Sans',sans-serif">20</text>
<text x="610.17" y="422.87" font-size="3.9" fill="#1c1c1c" text-anchor="middle" letter-spacing="-0.2" style="font-family:'Liberation Sans',sans-serif">10</text>
<text x="613.17" y="417.57" font-size="3.9" fill="#1c1c1c" text-anchor="middle" letter-spacing="-0.2" style="font-family:'Liberation Sans',sans-serif">5</text>
<text x="617.58" y="413.38" font-size="3.9" fill="#1c1c1c" text-anchor="middle" letter-spacing="-0.2" style="font-family:'Liberation Sans',sans-serif">2</text>
<text x="623.03" y="410.66" font-size="3.9" fill="#1c1c1c" text-anchor="middle" letter-spacing="-0.2" style="font-family:'Liberation Sans',sans-serif">1</text>
<text x="628.68" y="409.66" font-size="3.9" fill="#1c1c1c" text-anchor="middle" letter-spacing="-0.2" style="font-family:'Liberation Sans',sans-serif">0.5</text>
<text x="634.38" y="410.26" font-size="3.9" fill="#1c1c1c" text-anchor="middle" letter-spacing="-0.2" style="font-family:'Liberation Sans',sans-serif">0.2</text>
<text x="639.70" y="412.41" font-size="3.9" fill="#1c1c1c" text-anchor="middle" letter-spacing="-0.2" style="font-family:'Liberation Sans',sans-serif">0.1</text>
<text x="644.22" y="415.94" font-size="3.9" fill="#1c1c1c" text-anchor="middle" letter-spacing="-0.2" style="font-family:'Liberation Sans',sans-serif">50</text>
<text x="647.59" y="420.58" font-size="3.9" fill="#1c1c1c" text-anchor="middle" letter-spacing="-0.2" style="font-family:'Liberation Sans',sans-serif">20</text>
<text x="649.55" y="425.97" font-size="3.9" fill="#1c1c1c" text-anchor="middle" letter-spacing="-0.2" style="font-family:'Liberation Sans',sans-serif">10</text>
<text x="649.95" y="431.69" font-size="3.9" fill="#1c1c1c" text-anchor="middle" letter-spacing="-0.2" style="font-family:'Liberation Sans',sans-serif">5</text>
<text x="648.76" y="437.30" font-size="3.9" fill="#1c1c1c" text-anchor="middle" letter-spacing="-0.2" style="font-family:'Liberation Sans',sans-serif">2</text>
<text x="646.07" y="442.36" font-size="3.9" fill="#1c1c1c" text-anchor="middle" letter-spacing="-0.2" style="font-family:'Liberation Sans',sans-serif">1</text>
<text x="642.64" y="446.03" font-size="3.9" fill="#1c1c1c" text-anchor="middle" letter-spacing="-0.2" style="font-family:'Liberation Sans',sans-serif">0.5</text>
<path d="M638.22 415.31L641.65 410.03" stroke="#444" stroke-width="0.6"/>
<circle cx="629.6999999999999" cy="429.4" r="15.7" fill="#5a5a5a" opacity="0.5"/>
<circle cx="629.4" cy="428.9" r="15.2" fill="url(#kn)" stroke="#5c5c5c" stroke-width="0.5"/>
<circle cx="629.6" cy="428.59999999999997" r="7.9" fill="url(#cap)" stroke="#4a4a4a" stroke-width="0.8"/>
<path d="M619.83 418.27L625.47 420.47L621.43 424.11Z" fill="#e08030"/>
<circle cx="633.10" cy="433.10" r="1.25" fill="#e08030"/>
<rect x="620.1999999999999" y="445.6" width="18.6" height="6.5" fill="#fdfdfd" stroke="#3c3c3c" stroke-width="0.6"/>
<text x="621.6" y="450.8" font-size="5" fill="#2838c8" style="font-family:'Liberation Sans',sans-serif">2m</text>
<text x="612.35" y="449.8" font-size="5.4" fill="#333" text-anchor="middle" font-style="italic" style="font-family:'Liberation Sans',sans-serif">ms</text>
<text x="646.4" y="449.8" font-size="5.4" fill="#333" text-anchor="middle" font-style="italic" letter-spacing="-0.25" style="font-family:'Liberation Sans',sans-serif">µs</text>
</svg>
<div style="left:0;top:456px;width:848px;height:21px;background:linear-gradient(90deg,#20353f 0%,#1d2f3d 40%,#18253b 75%,#16223a 100%);"></div>
<div style="left:25.3px;top:457.2px;width:181.8px;height:19.8px;background:#f3f3f3;"></div>
<div class="t" style="left:46.70px;top:462.90px;font-size:7.8px;line-height:8.97px;color:#505050;transform:scaleX(0.9802);transform-origin:0 0;">Escribe aquí para buscar</div>
<div style="left:389.8px;top:456.5px;width:25.4px;height:20.5px;background:#4f5c69;"></div>
<svg width="848" height="477">
<path d="M8.3 463.3l3.6-.5v3.6h-3.6z M12.6 462.7l4.5-.7v4.4h-4.5z M8.3 467.1h3.6v3.6l-3.6-.5z M12.6 467.1h4.5v4.4l-4.5-.7z" fill="#fff"/>
<circle cx="37.2" cy="465.2" r="2.5" fill="none" stroke="#333" stroke-width="0.8"/><path d="M35.4 467l-2.6 2.7" stroke="#333" stroke-width="0.9"/>
<circle cx="220.3" cy="466.3" r="3.7" fill="none" stroke="#fff" stroke-width="1.1"/>
<rect x="242.6" y="463.6" width="5.4" height="5.4" fill="none" stroke="#e8e8e8" stroke-width="0.8"/><path d="M240.8 464v4.6M249.8 464v4.6" stroke="#e8e8e8" stroke-width="0.8"/><path d="M242.6 462.6h5.4M242.6 470h5.4" stroke="#b0b8c0" stroke-width="0.5"/>
<path d="M267.2 462.2h4.2l1 1.2h6.2v8.2h-11.4z" fill="#f7c948"/><rect x="267.2" y="465" width="11.4" height="6.6" fill="#fbdc70"/><rect x="269.4" y="467.6" width="7" height="4" fill="#4aa0e0"/><rect x="270.8" y="469.4" width="4.2" height="2.2" fill="#fbdc70"/>
<path d="M293 464.6h11.6l-.8 7h-10z" fill="#f4f4f4"/><path d="M296.4 464.6v-1.6q0-1.2 1.2-1.2h2.4q1.2 0 1.2 1.2v1.6" fill="none" stroke="#f4f4f4" stroke-width="0.8"/><rect x="296.3" y="465.9" width="2.2" height="2.2" fill="#e85030"/><rect x="299" y="465.9" width="2.2" height="2.2" fill="#78b820"/><rect x="296.3" y="468.6" width="2.2" height="2.2" fill="#28a0e8"/><rect x="299" y="468.6" width="2.2" height="2.2" fill="#f8b818"/>
<circle cx="324.8" cy="466.4" r="5.6" fill="#1f86d6"/><path d="M319.6 468.2q-.6-6 5.2-7q5.4-.2 5.8 4.8q-1 2.4-4 2q1.6-1.6 .2-3.2q-2.4-1.4-4.2 .8q-1.4 3 1.8 5.8q-3.6-.4-4.8-3.200z" fill="#48d0a0"/><path d="M322.6 465.6q2-2.2 4.2-.8q1.400 1.600-.2 3.200q3 .4 4-2q.4 3.600-2.600 5.400q-3.400 1.400-5.200-1q-1.600-2.400-.2-4.800z" fill="#1460b8"/>
<path d="M344 464.4l6.600-3.4l6.600 3.400v7.200h-13.200z" fill="#1c90e0"/><path d="M344.4 464.800h12.400v6.400h-12.400z" fill="#40b0f4"/><path d="M344.400 464.800l6.200 4.200l6.200-4.200" fill="#f4faff"/><path d="M344.400 464.800l6.200 4.200l6.200-4.200" fill="none" stroke="#1c78c8" stroke-width="0.5"/>
<rect x="370" y="460.400" width="13" height="11.6" fill="#1a2a60"/><path d="M371 461.400l3 1.200l2-1.600l2 1.800l3.600-1" stroke="#b8c8ff" stroke-width="0.9" fill="none"/><path d="M376.400 464l3.600 3.600l-3.600 3.600l-3.600-3.600z" fill="#e8c020"/><path d="M376.400 465.600l2 2l-2 2l-2-2z" fill="#403808"/><path d="M371 471l2.400-2M382 471l-2.400-2" stroke="#c8d0ff" stroke-width="0.7"/>
<rect x="396.200" y="462.400" width="13.200" height="7.400" fill="#1414e8"/>
<text x="402.8" y="468.300" font-size="6.2" fill="#fff" text-anchor="middle" font-weight="bold" letter-spacing="-0.2" style="font-family:'Liberation Sans',sans-serif">isis</text>
<path d="M423 468q-.6-5.600 5.600-6.600q5.400-.4 6 3.400q.2 2.200-2.600 2.200q-1.600.2-1.200 1.800q.4 2.200-2.400 2.400q-4.600.2-5.400-3.200z" fill="#f0e8d8" stroke="#a89880" stroke-width="0.4"/><circle cx="426" cy="465" r="1" fill="#e03030"/><circle cx="429" cy="463.400" r="1" fill="#30a0e0"/><circle cx="432" cy="464.600" r="1" fill="#40b040"/><circle cx="425.800" cy="468.200" r="1" fill="#f0c020"/><path d="M434.800 460.600l-5.600 8.200" stroke="#c89048" stroke-width="1.200"/>
<rect x="262.3" y="475.900" width="21.3" height="1.100" fill="#86c4f0"/>
<rect x="314.3" y="475.900" width="21.1" height="1.100" fill="#86c4f0"/>
<rect x="366.4" y="475.900" width="21.0" height="1.100" fill="#86c4f0"/>
<rect x="389.8" y="475.900" width="25.4" height="1.100" fill="#86c4f0"/>
<rect x="418" y="475.900" width="21.5" height="1.100" fill="#86c4f0"/>
<path d="M720.600 467.800l2.800-2.800l2.800 2.800" stroke="#fff" stroke-width="0.9" fill="none"/>
<rect x="736.200" y="464.600" width="7.800" height="4.200" fill="none" stroke="#fff" stroke-width="0.8"/><rect x="737.200" y="465.600" width="4.600" height="2.200" fill="#fff"/><rect x="744.200" y="465.800" width="1" height="1.800" fill="#fff"/>
<path d="M753 466.400h3.400l2.200-3.400h1l-1 3.400h2.400q1.200.2 1.200.600q0 .4-1.200.600h-2.400l1 3.400h-1l-2.200-3.400h-3.400l-.600 1.200h-.800l.4-1.800l-.4-1.800h.8z" fill="none" stroke="#fff" stroke-width="0.7"/>
<path d="M769.800 465.200h1.600l2.200-2v6.600l-2.200-2h-1.600z" fill="none" stroke="#fff" stroke-width="0.7"/><path d="M775 464.400q1.200 1.800 0 3.800M776.600 463.200q2 3 0 6.200" stroke="#9aa4b0" stroke-width="0.6" fill="none"/>
<path d="M826.800 462h8.800v6.400h-5l-2 2v-2h-1.800z" fill="none" stroke="#fff" stroke-width="0.8"/><path d="M828.400 464h5.600M828.400 465.800h5.600" stroke="#fff" stroke-width="0.5"/>
<circle cx="833.800" cy="469.800" r="3.100" fill="#2a2a2a" stroke="#fff" stroke-width="0.6"/><text x="833.800" y="471.700" font-size="5" fill="#fff" text-anchor="middle" style="font-family:'Liberation Sans',sans-serif">1</text>
</svg>
<div class="t" style="left:794.05px;top:458.00px;font-size:6.9px;line-height:7.93px;color:#fff;transform:scaleX(0.8282);transform-origin:0 0;">14:07</div>
<div class="t" style="left:786.35px;top:467.00px;font-size:6.9px;line-height:7.93px;color:#fff;transform:scaleX(0.8600);transform-origin:0 0;">03/04/2021</div>
</div></body></html>
